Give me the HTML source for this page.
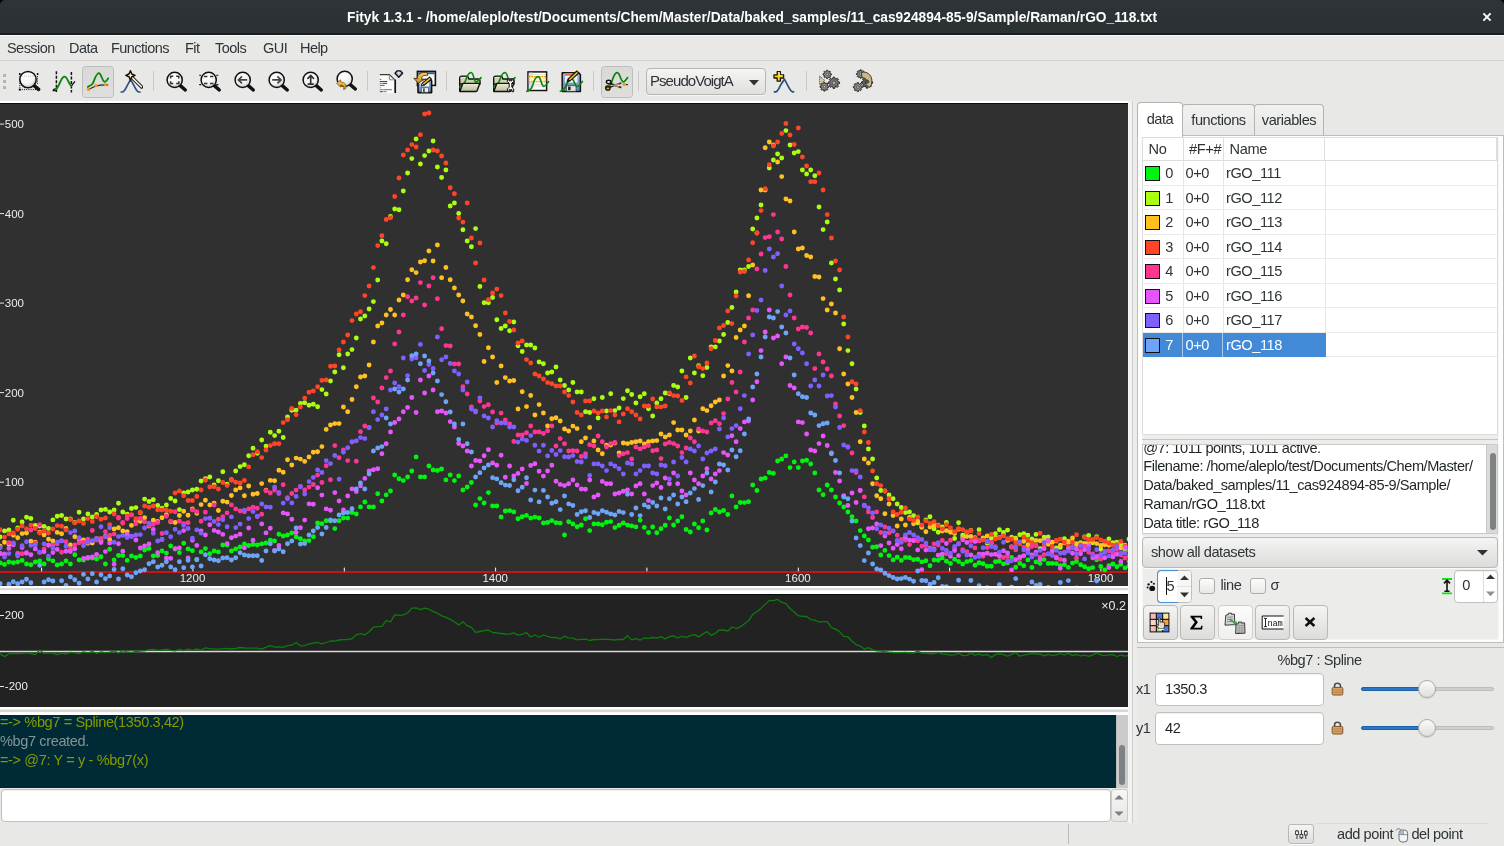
<!DOCTYPE html>
<html><head><meta charset="utf-8"><title>Fityk</title><style>
*{box-sizing:border-box;margin:0;padding:0}
html,body{width:1504px;height:846px;overflow:hidden}
body{background:#e8e8e7;font-family:"Liberation Sans",sans-serif;font-size:14px;color:#2e3436;position:relative}
.abs{position:absolute}
#title{left:0;top:0;width:1504px;height:35px;background:linear-gradient(#2f3438,#2b3033);border-bottom:2px solid #1b1e20;border-radius:5px 5px 0 0}
#title .t{position:absolute;left:0;width:1504px;top:7.6px;text-align:center;color:#fff;font-weight:700;font-size:15px;white-space:nowrap;transform:scaleX(.9165);transform-origin:752px 0}
#corner{left:0;top:0;width:1504px;height:10px;background:#000}
#menu{left:0;top:35px;width:1504px;height:26px;background:#e8e8e7;border-top:1px solid #fafafa;border-bottom:1px solid #d3d3d2}
#menu span{position:absolute;top:4px;font-size:14.5px;letter-spacing:-0.55px;white-space:nowrap}
#toolbar{left:0;top:61px;width:1504px;height:40px;background:#e8e8e7}
.btnon{width:32px;height:31.5px;background:linear-gradient(#d9d9d8,#dededd);border:1px solid #bdbdbb;border-radius:3.5px}
#combo{left:646px;top:7px;width:120px;height:27px;border:1px solid #b6b6b3;border-radius:4px;background:linear-gradient(#f5f5f4,#dfdfde);box-shadow:0 1px 0 rgba(255,255,255,.6)}
#combo span{position:absolute;left:3px;top:3.2px;font-size:15px;letter-spacing:-0.95px;white-space:nowrap}
.sep{position:absolute;top:10px;width:1px;height:20px;background:#c9c9c8}
#plotwrap{left:0;top:101px;width:1128px;height:493px;background:#fff}
#plot{position:absolute;left:0;top:2px}
#sash1{left:0;top:586px;width:1128px;height:8px;background:linear-gradient(#fff 0,#fff 28%,#d9d9d7 30%,#d9d9d7 50%,#f6f6f5 52%,#fff 70%,#fff 100%)}
#aux{position:absolute;left:0;top:594px}
#sash2{left:0;top:707px;width:1128px;height:8px;background:linear-gradient(#fff 0,#fff 30%,#d6d6d4 33%,#d6d6d4 58%,#f6f6f5 62%,#fff 75%,#fff 100%)}
#out{left:0;top:715px;width:1116px;height:73px;background:#002b36;color:#869a00;font-size:14.5px;letter-spacing:-0.36px;line-height:19px;white-space:pre;overflow:hidden}
#out div{position:absolute;left:0;top:-2px}
</style></head><body>
<div id="root" style="position:absolute;left:0;top:0;width:1504px;height:846px;will-change:transform">
<div id="corner" class="abs"></div>
<div id="title" class="abs"><div class="t">Fityk 1.3.1 - /home/aleplo/test/Documents/Chem/Master/Data/baked_samples/11_cas924894-85-9/Sample/Raman/rGO_118.txt</div><svg class="abs" style="left:1481px;top:11px" width="12" height="12" viewBox="0 0 12 12"><path d="M2.4 2.4L9.6 9.6M9.6 2.4L2.4 9.6" stroke="#fff" stroke-width="2"/></svg></div>
<div id="menu" class="abs"><span style="left:7px">Session</span><span style="left:69px">Data</span><span style="left:111px">Functions</span><span style="left:185px">Fit</span><span style="left:215px">Tools</span><span style="left:263px">GUI</span><span style="left:300px">Help</span></div>
<div id="toolbar" class="abs"><svg width="0" height="0" style="position:absolute"><defs>
<radialGradient id="lg" cx="40%" cy="30%" r="75%"><stop offset="0" stop-color="#ffffff"/><stop offset="0.6" stop-color="#f4f4f4"/><stop offset="1" stop-color="#c4c4c4"/></radialGradient>
<linearGradient id="fold" x1="0" y1="0" x2="0" y2="1"><stop offset="0" stop-color="#ecedcf"/><stop offset="1" stop-color="#b9bb9b"/></linearGradient>
<linearGradient id="flop" x1="0" y1="0" x2="0" y2="1"><stop offset="0" stop-color="#9dbbe0"/><stop offset="1" stop-color="#5a82b6"/></linearGradient>
<linearGradient id="btn" x1="0" y1="0" x2="0" y2="1"><stop offset="0" stop-color="#f4f4f3"/><stop offset="1" stop-color="#dddddc"/></linearGradient>
<linearGradient id="gold" x1="0" y1="0" x2="0" y2="1"><stop offset="0" stop-color="#f6d26a"/><stop offset="1" stop-color="#c98a1a"/></linearGradient>
</defs></svg><div class="abs" style="left:2.6px;top:13px;width:3px;height:3px;background:#b4b4b3"></div><div class="abs" style="left:2.6px;top:19px;width:3px;height:3px;background:#b4b4b3"></div><div class="abs" style="left:2.6px;top:24.6px;width:3px;height:3px;background:#b4b4b3"></div><div class="abs" style="left:17.0px;top:8px;width:24px;height:24px"><svg width="24" height="24" viewBox="0 0 24 24"><path d="M16.8 16.4L21.6 20.4" stroke="#111" stroke-width="3.6" stroke-linecap="round"/><circle cx="11" cy="10.6" r="8.2" fill="url(#lg)" stroke="#111" stroke-width="1.5"/><path d="M2.8 5V20.6H20.5M20.5 5V16" fill="none" stroke="#111" stroke-width="1" stroke-dasharray="1 1.2"/><path d="M5 7.2H17" stroke="#bbb" stroke-width=".8" stroke-dasharray="1 1"/><circle cx="2.8" cy="5" r="1" fill="#111"/><circle cx="20.6" cy="5" r="1" fill="#111"/><circle cx="2.8" cy="20.7" r="1.1" fill="#111"/></svg></div><div class="abs" style="left:49.0px;top:8px;width:28px;height:24px"><svg width="28" height="24" viewBox="0 0 28 24"><path d="M7.4 2.2V23M22.4 3V23.4" stroke="#111" stroke-width="1.5" stroke-dasharray="3 1.5"/><path d="M4 20.8l2.6-1.2M3.6 21.6h3.4" stroke="#111" stroke-width="1.2"/><path d="M22.6 16.6L26 12.4" stroke="#111" stroke-width="1.3"/><path d="M6.6 20.6C10 19 11.5 8.5 15.2 7.6C18.5 7 19.5 15.5 22.4 16.8" fill="none" stroke="#0a840a" stroke-width="1.9" stroke-linecap="round" stroke-linejoin="round"/></svg></div><div class="abs btnon" style="left:81.5px;top:5px"></div><div class="abs" style="left:84.5px;top:8px;width:26px;height:24px"><svg width="26" height="24" viewBox="0 0 26 24"><path d="M2.8 18C5 16 6.8 16.8 8 14.2C10 9 11.5 3.9 14 4.2C16.5 4.8 17 12 19.5 12.9C21 13.1 22.4 10.4 23.2 9.4" fill="none" stroke="#0a840a" stroke-width="1.8" stroke-linecap="round" stroke-linejoin="round"/><path d="M3.8 20.4C8 18 12 15.4 23.2 16" fill="none" stroke="#1c1c30" stroke-width="1.1"/><circle cx="3.6" cy="20.4" r="1.7" fill="#f0960f"/><circle cx="11" cy="16.6" r="1.7" fill="#f0960f"/><circle cx="20.4" cy="15.5" r="1.6" fill="#f0960f"/></svg></div><div class="abs" style="left:119.0px;top:8px;width:24px;height:24px"><svg width="24" height="24" viewBox="0 0 24 24"><path d="M2.2 23H3.6C5.4 22.6 6.4 20.4 8.2 16.6L11.6 10.4L15 16.6C16.8 20.4 17.8 22.6 19.6 23H21" fill="none" stroke="#2c5288" stroke-width="1.7" stroke-linecap="round" stroke-linejoin="round"/><path d="M12 7.5L22.6 18" stroke="#1a1a1a" stroke-width="3.4" stroke-linecap="round"/><path d="M12.6 8.1L22.4 17.8" stroke="#f2f0e6" stroke-width="1.6" stroke-linecap="round"/><path d="M11.4 1.8L12.8 5L16 6.4L12.8 7.8L11.4 11L10 7.8L6.8 6.4L10 5Z" fill="#e2b45a" stroke="#15100a" stroke-width="1.5" stroke-linejoin="round"/><path d="M11.4 3.8L12 5.8L14 6.4L12 7L11.4 9L10.8 7L8.8 6.4L10.8 5.8Z" fill="#fff2cc"/></svg></div><div class="sep" style="left:153px"></div><div class="abs" style="left:164.0px;top:8px;width:24px;height:24px"><svg width="24" height="24" viewBox="0 0 24 24"><path d="M16.3 16.6L21.3 21" stroke="#111" stroke-width="3.4" stroke-linecap="round"/><circle cx="10.7" cy="10.9" r="7.6" fill="url(#lg)" stroke="#111" stroke-width="1.5"/><path d="M6.6 9.6V7.2H9.2M12.2 7.2H14.8V9.6M14.8 12.2V14.6H12.2M9.2 14.6H6.6V12.2" fill="none" stroke="#333" stroke-width="1.5"/></svg></div><div class="abs" style="left:198.0px;top:8px;width:24px;height:24px"><svg width="24" height="24" viewBox="0 0 24 24"><path d="M16.3 16.6L21.3 21" stroke="#111" stroke-width="3.4" stroke-linecap="round"/><circle cx="10.7" cy="10.9" r="7.6" fill="url(#lg)" stroke="#111" stroke-width="1.5"/><path d="M6 7.4H9.4M12 7.4H15.4M6 14.4H9.4M12 14.4H15.4" stroke="#333" stroke-width="1.5"/><path d="M1.2 6.2H3.2M1.2 15.6H3.2M18.2 6.2H20.4M18.2 15.6H20.4" stroke="#111" stroke-width="1.1"/></svg></div><div class="abs" style="left:232.0px;top:8px;width:24px;height:24px"><svg width="24" height="24" viewBox="0 0 24 24"><path d="M16.3 16.6L21.3 21" stroke="#111" stroke-width="3.4" stroke-linecap="round"/><circle cx="10.7" cy="10.9" r="7.6" fill="url(#lg)" stroke="#111" stroke-width="1.5"/><path d="M15.2 10.9H6.6M10 7.4L6.4 10.9L10 14.4" fill="none" stroke="#444" stroke-width="1.7"/></svg></div><div class="abs" style="left:266.0px;top:8px;width:24px;height:24px"><svg width="24" height="24" viewBox="0 0 24 24"><path d="M16.3 16.6L21.3 21" stroke="#111" stroke-width="3.4" stroke-linecap="round"/><circle cx="10.7" cy="10.9" r="7.6" fill="url(#lg)" stroke="#111" stroke-width="1.5"/><path d="M6.2 10.9H14.8M11.4 7.4L15 10.9L11.4 14.4" fill="none" stroke="#444" stroke-width="1.7"/></svg></div><div class="abs" style="left:300.0px;top:8px;width:24px;height:24px"><svg width="24" height="24" viewBox="0 0 24 24"><path d="M16.3 16.6L21.3 21" stroke="#111" stroke-width="3.4" stroke-linecap="round"/><circle cx="10.7" cy="10.9" r="7.6" fill="url(#lg)" stroke="#111" stroke-width="1.5"/><path d="M10.7 15V6.6M7.4 9.8L10.7 6.4L14 9.8M7.6 15.2H13.8" fill="none" stroke="#333" stroke-width="1.7"/></svg></div><div class="abs" style="left:333.0px;top:8px;width:24px;height:24px"><svg width="24" height="24" viewBox="0 0 24 24"><path d="M17.3 15.6L22.3 20" stroke="#111" stroke-width="3.4" stroke-linecap="round"/><circle cx="11.7" cy="9.9" r="7.6" fill="url(#lg)" stroke="#111" stroke-width="1.5"/><path d="M3.6 14.2L7.6 10.8V13C11.6 12.8 13.8 15.2 12.6 19.8L10.4 20.4C11.4 17.6 10.6 16.2 7.6 16.2V18.2Z" fill="url(#gold)" stroke="#8a5a0a" stroke-width=".8" stroke-linejoin="round"/></svg></div><div class="sep" style="left:367px"></div><div class="abs" style="left:378.0px;top:8px;width:26px;height:24px"><svg width="26" height="25" viewBox="0 0 26 25"><path d="M1.8 5.6H11.6L17 10.8V24H1.8Z" fill="#fbfbfb"/><path d="M1.8 5.6H11.4L16.4 10.4" fill="none" stroke="#3a3a3a" stroke-width="1.1"/><path d="M11.4 6.4V10.8H17" fill="none" stroke="#8a8a8a" stroke-width="1"/><path d="M17.2 10.4V24" stroke="#111" stroke-width="1.7"/><path d="M1.8 10.4H3.4" stroke="#3a9a3a" stroke-width="1"/><path d="M1.8 12.5H9.2" stroke="#3a3a8c" stroke-width="1"/><path d="M1.8 14.4H4" stroke="#f05020" stroke-width="1"/><path d="M4.4 14.4H9.2" stroke="#3a3a8c" stroke-width="1"/><path d="M1.8 16.4H6.6" stroke="#5a5a9c" stroke-width="1"/><path d="M1.8 18.8H2.8" stroke="#6a8ab0" stroke-width="1"/><path d="M1.8 20.7H4.8" stroke="#f05020" stroke-width="1"/><path d="M5.2 20.7H14" stroke="#6a6aac" stroke-width="1"/><path d="M1.8 22.7H5.2" stroke="#3a3a8c" stroke-width="1"/><path d="M5.6 22.7H8.6" stroke="#f05020" stroke-width="1"/><path d="M19 1.9H22.6L24.6 4.2L20.8 8.2L17 4.2Z" fill="#b9aedc" stroke="#0e0e0e" stroke-width="1.3" stroke-linejoin="round"/><path d="M19.6 3L20.8 6.6L22 3Z" fill="#e6e0f6"/></svg></div><div class="abs" style="left:412.0px;top:8px;width:25px;height:24px"><svg width="25" height="25" viewBox="0 0 25 25"><rect x="5.4" y="2.4" width="18" height="14" fill="#f7f7f7" stroke="#111" stroke-width="1.6"/><rect x="6.2" y="3.2" width="16.4" height="2" fill="#3a5f8c"/><path d="M6 10.6H18.4L19.6 11.8V23.6H6Z" fill="url(#flop)" stroke="#111" stroke-width="1.6" stroke-linejoin="round"/><rect x="8.4" y="10.8" width="8.6" height="6.6" fill="#f2f4f8"/><path d="M8.4 11.6H12" stroke="#e08080" stroke-width="1.4"/><rect x="9.4" y="18.8" width="7" height="4.4" fill="#f2f2ee" stroke="#444" stroke-width=".6"/><rect x="11" y="19.4" width="1.8" height="3.4" fill="#28507e"/><path d="M1.8 9.2L5.2 9.8C5.2 5 9.2 2.6 15.4 3.6L15.6 6.4C11.6 5.8 9.4 7.2 9.6 10.2L11.6 10.6L6.2 14.2Z" fill="url(#gold)" stroke="#4e3608" stroke-width=".9" stroke-linejoin="round"/><path d="M9.4 16.8L10.4 14.2L17.6 8.2L19.4 10.2L12 16.2Z" fill="#f4c21c" stroke="#111" stroke-width="1.1" stroke-linejoin="round"/><path d="M9.4 16.8L10.4 14.2L12 16.2Z" fill="#f2e0c8" stroke="#111" stroke-width=".7"/></svg></div><div class="sep" style="left:446px"></div><div class="abs" style="left:457.0px;top:8px;width:25px;height:24px"><svg width="25" height="25" viewBox="0 0 25 25"><path d="M2.7 21.8V9.2C2.7 7.9 3.4 7.3 4.7 7.3H10.2C10.8 7.3 11 7.6 11.2 8.2L11.8 10H21.4C22.6 10 23 10.6 23 11.6V15H2.7Z" fill="#cfd1b0" stroke="#111" stroke-width="1.4" stroke-linejoin="round"/><path d="M3.6 9.4C3.6 8.6 4 8.3 4.8 8.3H9.6" fill="none" stroke="#eef0d8" stroke-width=".9"/><path d="M2.8 17.8C5 16.8 6.6 15.4 7.8 13.2C9.6 9.6 10.2 4 14 3.5C17 3.6 16.6 12.6 19 13.1C20.6 13 22.4 10.4 24 8.6" fill="none" stroke="#0a840a" stroke-width="1.6" stroke-linecap="round" stroke-linejoin="round"/><path d="M2.8 22.4L5.8 14.5H22.8L20.2 21.6C20 22.2 19.6 22.5 19 22.5H3.6C3 22.5 2.7 22.5 2.8 22.4Z" fill="url(#fold)" stroke="#111" stroke-width="1.4" stroke-linejoin="round"/><path d="M6.6 15.5H21.4" stroke="#f4f6e0" stroke-width=".8"/></svg></div><div class="abs" style="left:491.0px;top:8px;width:25px;height:24px"><svg width="25" height="25" viewBox="0 0 25 25"><path d="M2.7 21.8V9.2C2.7 7.9 3.4 7.3 4.7 7.3H10.2C10.8 7.3 11 7.6 11.2 8.2L11.8 10H21.4C22.6 10 23 10.6 23 11.6V15H2.7Z" fill="#cfd1b0" stroke="#111" stroke-width="1.4" stroke-linejoin="round"/><path d="M3.6 9.4C3.6 8.6 4 8.3 4.8 8.3H9.6" fill="none" stroke="#eef0d8" stroke-width=".9"/><path d="M2.8 17.8C5 16.8 6.6 15.4 7.8 13.2C9.6 9.6 10.2 4 14 3.5C17 3.6 16.6 12.6 19 13.1C20.6 13 22.4 10.4 24 8.6" fill="none" stroke="#0a840a" stroke-width="1.6" stroke-linecap="round" stroke-linejoin="round"/><path d="M2.8 22.4L5.8 14.5H22.8L20.2 21.6C20 22.2 19.6 22.5 19 22.5H3.6C3 22.5 2.7 22.5 2.8 22.4Z" fill="url(#fold)" stroke="#111" stroke-width="1.4" stroke-linejoin="round"/><path d="M6.6 15.5H21.4" stroke="#f4f6e0" stroke-width=".8"/><path d="M16.4 10V12.4L18.2 14.2V18.2L16.4 20V22.7H18V20.8H21V22.7H22.7V20L20.8 18.2V14.2L22.7 12.4V10H21V11.8H18V10Z" fill="#fdfdfd" stroke="#111" stroke-width="1" stroke-linejoin="round"/></svg></div><div class="abs" style="left:525.0px;top:8px;width:25px;height:24px"><svg width="25" height="25" viewBox="0 0 25 25"><rect x="3" y="2.9" width="18.6" height="18.6" fill="#fbfbfb" stroke="#151515" stroke-width="1.5"/><rect x="3.8" y="3.7" width="4" height="17" fill="#d4dcea"/><path d="M3.8 5.6H20.8M3.8 17.6H20.8" stroke="#dcdcdc" stroke-width=".8"/><rect x="4" y="7.6" width="16.8" height="5.2" fill="#fdf0c4" stroke="#e8a000" stroke-width="1.1" stroke-dasharray="1.8 .7"/><path d="M8 15.6H20" stroke="#dedede" stroke-width="1.2"/><path d="M1.8 22.4C5 21.6 6.4 20.6 7.6 16.6C9 11.4 10.6 7.4 13.2 7.6C16 8 16 16.6 18.6 17.4C20.6 17.6 22.4 14.2 23.6 12.6" fill="none" stroke="#0a840a" stroke-width="1.6" stroke-linecap="round" stroke-linejoin="round"/></svg></div><div class="abs" style="left:559.0px;top:8px;width:25px;height:24px"><svg width="25" height="25" viewBox="0 0 25 25"><path d="M3.2 3.8H19.6L21.4 5.6V22.6H3.2Z" fill="url(#flop)" stroke="#151515" stroke-width="1.5" stroke-linejoin="round"/><rect x="6" y="4.6" width="12.4" height="9" fill="#f6f6f6"/><rect x="6" y="4.6" width="12.4" height="2.2" fill="#ee6a5a"/><path d="M6.8 9H17.6M6.8 11H17.6" stroke="#d4d4d4" stroke-width=".7"/><rect x="7.4" y="16.8" width="9.6" height="5.4" fill="#e4e4e0" stroke="#333" stroke-width=".6"/><rect x="9" y="17.6" width="2.6" height="3.6" fill="#222"/><path d="M1.4 22.2C4 21.6 5.6 20.4 7.2 16.4C9 12 10.4 9 12.8 9.4C15.2 10.2 15.6 17 18 17.6C20 17.8 22 14.2 23.4 12.4" fill="none" stroke="#0a840a" stroke-width="1.6" stroke-linecap="round" stroke-linejoin="round"/><path d="M8.2 12.8L9.2 10L17.8 2L19.8 4L11 11.8Z" fill="#f4c21c" stroke="#151515" stroke-width="1.1" stroke-linejoin="round"/><path d="M8.2 12.8L9.2 10L11 11.8Z" fill="#222" stroke="#151515" stroke-width=".7"/></svg></div><div class="sep" style="left:593px"></div><div class="abs btnon" style="left:601px;top:5px"></div><div class="abs" style="left:605.0px;top:8px;width:24px;height:24px"><svg width="24" height="24" viewBox="0 0 24 24"><path d="M0.8 19.4V17.6C2.4 16.4 4 16.6 5.2 16C6.6 14.6 7.2 11 8.2 8.6C9.4 5.8 10.6 3.6 12.4 3.7C15 4 15.4 12 18.4 13C19.8 12.8 21.4 10.2 22.6 8.6" fill="none" stroke="#0a840a" stroke-width="1.7" stroke-linecap="round" stroke-linejoin="round"/><circle cx="2.4" cy="20.2" r="1.8" fill="#f0a010"/><path d="M19 15.6H23" stroke="#222" stroke-width="1.1"/><path d="M5 14.4L15.6 18.4M4.6 18.2L15.6 14.2" stroke="#222" stroke-width="1.7" stroke-linecap="round"/><path d="M8.4 15.9L14.4 18M8.4 17L14.4 14.8" stroke="#e8e8e8" stroke-width=".7"/><ellipse cx="3.6" cy="13" rx="2.2" ry="1.7" fill="#f2f2f2" stroke="#111" stroke-width="1.4"/><ellipse cx="2.9" cy="19.4" rx="2.1" ry="1.7" fill="none" stroke="#111" stroke-width="1.4"/><circle cx="10.6" cy="16.4" r="1.3" fill="#c88a18"/><circle cx="19.2" cy="15.5" r="1.8" fill="#f0a010"/></svg></div><div class="sep" style="left:638px"></div><div class="abs" id="combo"><span>PseudoVoigtA</span><svg class="abs" style="left:102px;top:11px" width="10" height="6" viewBox="0 0 10 6"><path d="M0 0H10L5 5.4Z" fill="#2e3436"/></svg></div><div class="abs" style="left:772.0px;top:8px;width:24px;height:24px"><svg width="24" height="24" viewBox="0 0 24 24"><path d="M2.4 22.8H3.8C5.6 22.4 6.6 20.4 8.2 16.8L12.4 10.2L16 16.8C17.8 20.4 18.8 22.4 20.4 22.8H21.6" fill="none" stroke="#27517f" stroke-width="1.7" stroke-linecap="round" stroke-linejoin="round"/><path d="M5.2 2.6H8.4V5.8H11.6V9H8.4V12.2H5.2V9H2V5.8H5.2Z" fill="#f8d424" stroke="#1a1404" stroke-width="1.3" stroke-linejoin="round"/><path d="M5.9 3.6H7.6V6.6H10.6" fill="none" stroke="#fdf0a0" stroke-width=".8"/></svg></div><div class="sep" style="left:806px"></div><div class="abs" style="left:816.5px;top:8px;width:24px;height:24px"><svg width="24" height="24" viewBox="0 0 24 24"><path d="M14.4 4.9L14.4 5.9L13.2 6.2L12.9 7.0L13.5 8.0L12.8 8.7L11.8 8.1L11.0 8.4L10.7 9.6L9.7 9.6L9.4 8.4L8.6 8.1L7.6 8.7L6.9 8.0L7.5 7.0L7.2 6.2L6.0 5.9L6.0 4.9L7.2 4.6L7.5 3.8L6.9 2.8L7.6 2.1L8.6 2.7L9.4 2.4L9.7 1.2L10.7 1.2L11.0 2.4L11.8 2.7L12.8 2.1L13.5 2.8L12.9 3.8L13.2 4.6Z" fill="#8c8c8c" stroke="#2a2a2a" stroke-width="1" stroke-linejoin="round"/><circle cx="10.2" cy="5.4" r="1.2" fill="#c8c8c8" stroke="#3a3a3a" stroke-width=".7"/><path d="M11.8 17.1L11.8 18.3L10.5 18.5L10.2 19.3L10.9 20.4L10.1 21.2L9.0 20.5L8.2 20.8L8.0 22.1L6.8 22.1L6.6 20.8L5.8 20.5L4.7 21.2L3.9 20.4L4.6 19.3L4.3 18.5L3.0 18.3L3.0 17.1L4.3 16.9L4.6 16.1L3.9 15.0L4.7 14.2L5.8 14.9L6.6 14.6L6.8 13.3L8.0 13.3L8.2 14.6L9.0 14.9L10.1 14.2L10.9 15.0L10.2 16.1L10.5 16.9Z" fill="#868686" stroke="#2a2a2a" stroke-width="1" stroke-linejoin="round"/><circle cx="7.4" cy="17.7" r="1.2" fill="#c8c8c8" stroke="#3a3a3a" stroke-width=".7"/><path d="M22.6 13.1L22.6 14.5L21.0 14.9L20.6 15.9L21.4 17.3L20.4 18.3L19.0 17.5L18.0 17.9L17.6 19.5L16.2 19.5L15.8 17.9L14.8 17.5L13.4 18.3L12.4 17.3L13.2 15.9L12.8 14.9L11.2 14.5L11.2 13.1L12.8 12.7L13.2 11.7L12.4 10.3L13.4 9.3L14.8 10.1L15.8 9.7L16.2 8.1L17.6 8.1L18.0 9.7L19.0 10.1L20.4 9.3L21.4 10.3L20.6 11.7L21.0 12.7Z" fill="#727272" stroke="#2a2a2a" stroke-width="1" stroke-linejoin="round"/><circle cx="16.9" cy="13.8" r="1.6" fill="#c8c8c8" stroke="#3a3a3a" stroke-width=".7"/><path d="M2.6 7L7.8 11.4L2.6 15.8Z" fill="#d8c79a" stroke="#3a3424" stroke-width=".8" stroke-dasharray="1.2 .8" stroke-linejoin="round"/></svg></div><div class="abs" style="left:852.0px;top:8px;width:24px;height:24px"><svg width="24" height="24" viewBox="0 0 24 24"><path d="M12.8 4.5L12.8 5.5L11.6 5.8L11.3 6.6L11.9 7.6L11.2 8.3L10.2 7.7L9.4 8.0L9.1 9.2L8.1 9.2L7.8 8.0L7.0 7.7L6.0 8.3L5.3 7.6L5.9 6.6L5.6 5.8L4.4 5.5L4.4 4.5L5.6 4.2L5.9 3.4L5.3 2.4L6.0 1.7L7.0 2.3L7.8 2.0L8.1 0.8L9.1 0.8L9.4 2.0L10.2 2.3L11.2 1.7L11.9 2.4L11.3 3.4L11.6 4.2Z" fill="#8a8a8a" stroke="#2a2a2a" stroke-width="1" stroke-linejoin="round"/><circle cx="8.6" cy="5" r="1.2" fill="#c8c8c8" stroke="#3a3a3a" stroke-width=".7"/><path d="M10.3 17.5L10.3 18.7L9.0 19.0L8.7 19.8L9.4 20.8L8.5 21.7L7.5 21.0L6.7 21.3L6.4 22.6L5.2 22.6L4.9 21.3L4.1 21.0L3.1 21.7L2.2 20.8L2.9 19.8L2.6 19.0L1.3 18.7L1.3 17.5L2.6 17.2L2.9 16.4L2.2 15.4L3.1 14.5L4.1 15.2L4.9 14.9L5.2 13.6L6.4 13.6L6.7 14.9L7.5 15.2L8.5 14.5L9.4 15.4L8.7 16.4L9.0 17.2Z" fill="#8a8a8a" stroke="#2a2a2a" stroke-width="1" stroke-linejoin="round"/><circle cx="5.8" cy="18.1" r="1.3" fill="#c8c8c8" stroke="#3a3a3a" stroke-width=".7"/><path d="M20.6 12.9L20.6 14.3L19.0 14.7L18.6 15.7L19.4 17.0L18.4 18.0L17.1 17.2L16.1 17.6L15.7 19.2L14.3 19.2L13.9 17.6L12.9 17.2L11.6 18.0L10.6 17.0L11.4 15.7L11.0 14.7L9.4 14.3L9.4 12.9L11.0 12.5L11.4 11.5L10.6 10.2L11.6 9.2L12.9 10.0L13.9 9.6L14.3 8.0L15.7 8.0L16.1 9.6L17.1 10.0L18.4 9.2L19.4 10.2L18.6 11.5L19.0 12.5Z" fill="#606060" stroke="#2a2a2a" stroke-width="1" stroke-linejoin="round"/><circle cx="15" cy="13.6" r="1.6" fill="#c8c8c8" stroke="#3a3a3a" stroke-width=".7"/><path d="M9.4 3.4C16.4 1.6 21.6 8 19.4 15.6L17.4 18.6L13.6 15.2C15.6 11.6 14 8.4 10 8.8Z" fill="#c9b98a" stroke="#3a3020" stroke-width=".9" stroke-linejoin="round"/><circle cx="15.2" cy="12.6" r="1.7" fill="#555" stroke="#2a2a2a" stroke-width=".6"/></svg></div></div>
<div id="plotwrap" class="abs"><svg id="plot" width="1128" height="483" viewBox="0 103 1128 483">
<rect x="0" y="103" width="1128" height="483" fill="#303030"/>
<rect x="0" y="102.7" width="1128" height="1.2" fill="#0a0a0a"/>
<path d="M0 572H1128" stroke="#c81414" stroke-width="2"/>
<path d="M41.6 567.6V571.4 M192.9 567.6V571.4 M344.3 567.6V571.4 M495.6 567.6V571.4 M646.9 567.6V571.4 M798.3 567.6V571.4 M949.6 567.6V571.4 M1100.9 567.6V571.4" stroke="#ffffff" stroke-width="1"/>
<path d="M0 482.2H4 M0 392.6H4 M0 303.1H4 M0 213.6H4 M0 124.1H4" stroke="#e8e8e8" stroke-width="1"/>
<g font-family="Liberation Sans, sans-serif" font-size="11.5" fill="#ececec">
<text x="4.8" y="486.3">100</text>
<text x="4.8" y="396.7">200</text>
<text x="4.8" y="307.2">300</text>
<text x="4.8" y="217.7">400</text>
<text x="4.8" y="128.2">500</text>
<text x="192.5" y="582.4" text-anchor="middle">1200</text>
<text x="495.2" y="582.4" text-anchor="middle">1400</text>
<text x="797.9" y="582.4" text-anchor="middle">1600</text>
<text x="1100.5" y="582.4" text-anchor="middle">1800</text>
</g>
<path d="M-8.7 569.5h0M-4.3 561.2h0M0.1 563.0h0M4.5 564.5h0M8.9 562.0h0M13.3 562.7h0M17.7 562.0h0M22.1 560.5h0M26.5 564.0h0M30.9 564.7h0M35.3 562.0h0M39.7 561.0h0M44.1 564.0h0M48.5 559.0h0M52.9 560.9h0M57.2 565.0h0M61.6 564.0h0M66.0 561.0h0M70.4 564.0h0M74.8 554.7h0M79.1 560.0h0M83.5 560.0h0M87.9 558.2h0M92.3 558.0h0M96.6 559.0h0M101.0 556.7h0M105.4 564.0h0M109.7 549.2h0M114.1 560.0h0M118.5 555.5h0M122.8 555.6h0M127.2 560.4h0M131.5 556.0h0M135.9 557.5h0M140.3 556.0h0M144.6 550.0h0M149.0 548.5h0M153.3 556.0h0M157.7 555.6h0M162.0 551.0h0M166.4 553.1h0M170.7 546.0h0M175.1 549.0h0M179.4 552.6h0M183.7 543.3h0M188.1 548.9h0M192.4 550.7h0M196.8 559.5h0M201.1 551.9h0M205.4 548.6h0M209.8 553.7h0M214.1 551.0h0M218.4 551.9h0M222.8 545.0h0M227.1 545.0h0M231.4 551.0h0M235.7 548.9h0M240.1 547.0h0M244.4 544.0h0M248.7 545.5h0M253.0 544.5h0M257.3 545.0h0M261.7 543.9h0M266.0 543.0h0M270.3 540.2h0M274.6 541.0h0M278.9 534.2h0M283.2 536.0h0M287.5 535.0h0M291.8 533.0h0M296.1 536.9h0M300.4 538.7h0M304.7 541.0h0M309.0 540.6h0M313.3 536.7h0M317.6 523.0h0M321.9 523.7h0M326.2 520.7h0M330.5 521.1h0M334.8 528.6h0M339.1 520.7h0M343.4 518.0h0M347.7 518.1h0M352.0 512.5h0M356.3 514.0h0M360.5 506.9h0M364.8 502.0h0M369.1 506.9h0M373.4 506.9h0M377.7 493.7h0M381.9 501.0h0M386.2 494.9h0M390.5 491.0h0M394.7 475.0h0M399.0 478.7h0M403.3 480.6h0M407.6 476.9h0M411.8 471.0h0M416.1 457.0h0M420.4 476.9h0M424.6 476.9h0M428.9 466.0h0M433.1 470.0h0M437.4 470.5h0M441.6 469.0h0M445.9 479.9h0M450.2 475.0h0M454.4 480.6h0M458.7 476.0h0M462.9 490.0h0M467.2 487.0h0M471.4 482.5h0M475.6 505.0h0M479.9 498.6h0M484.1 503.0h0M488.4 492.6h0M492.6 506.0h0M496.8 506.0h0M501.1 517.0h0M505.3 511.0h0M509.6 510.6h0M513.8 511.9h0M518.0 518.7h0M522.2 516.8h0M526.5 515.4h0M530.7 518.1h0M534.9 517.1h0M539.1 518.0h0M543.4 523.0h0M547.6 522.5h0M551.8 520.6h0M556.0 522.8h0M560.2 523.1h0M564.5 535.0h0M568.7 521.8h0M572.9 524.0h0M577.1 526.7h0M581.3 525.0h0M585.5 518.7h0M589.7 530.6h0M593.9 524.0h0M598.1 524.0h0M602.3 524.7h0M606.5 522.3h0M610.7 521.6h0M614.9 527.6h0M619.1 525.3h0M623.3 523.0h0M627.5 525.1h0M631.7 526.0h0M635.9 526.9h0M640.1 520.3h0M644.3 527.4h0M648.5 532.5h0M652.7 527.0h0M656.8 532.8h0M661.0 528.7h0M665.2 525.2h0M669.4 518.0h0M673.6 525.0h0M677.7 521.0h0M681.9 516.7h0M686.1 529.5h0M690.3 532.0h0M694.4 524.0h0M698.6 527.8h0M702.8 521.0h0M706.9 530.0h0M711.1 513.0h0M715.3 509.5h0M719.4 512.0h0M723.6 510.5h0M727.8 514.5h0M731.9 496.0h0M736.1 507.0h0M740.2 502.5h0M744.4 502.6h0M748.6 501.7h0M752.7 485.0h0M756.9 490.5h0M761.0 479.0h0M765.2 478.1h0M769.3 472.5h0M773.4 473.4h0M777.6 461.0h0M781.7 459.0h0M785.9 455.9h0M790.0 467.6h0M794.2 461.9h0M798.3 467.6h0M802.4 461.0h0M806.6 460.3h0M810.7 464.0h0M814.8 473.0h0M819.0 490.0h0M823.1 494.8h0M827.2 485.0h0M831.4 490.0h0M835.5 497.0h0M839.6 503.0h0M843.7 507.0h0M847.9 512.0h0M852.0 516.7h0M856.1 521.0h0M860.2 530.6h0M864.3 536.0h0M868.4 540.0h0M872.6 547.2h0M876.7 546.7h0M880.8 555.0h0M884.9 550.4h0M889.0 555.6h0M893.1 559.9h0M897.2 557.2h0M901.3 560.4h0M905.4 557.5h0M909.5 557.7h0M913.6 559.8h0M917.7 559.3h0M921.8 561.9h0M925.9 560.8h0M930.0 565.8h0M934.1 560.0h0M938.2 560.2h0M942.3 557.9h0M946.4 561.3h0M950.5 563.5h0M954.6 559.3h0M958.6 561.5h0M962.7 564.1h0M966.8 561.6h0M970.9 560.6h0M975.0 565.3h0M979.1 562.7h0M983.1 563.8h0M987.2 566.2h0M991.3 566.2h0M995.4 561.8h0M999.4 561.3h0M1003.5 563.9h0M1007.6 562.7h0M1011.6 557.4h0M1015.7 567.2h0M1019.8 563.4h0M1023.8 565.7h0M1027.9 559.9h0M1031.9 567.5h0M1036.0 561.9h0M1040.1 563.5h0M1044.1 559.6h0M1048.2 563.5h0M1052.2 563.4h0M1056.3 563.6h0M1060.3 565.6h0M1064.4 564.6h0M1068.4 567.4h0M1072.5 563.1h0M1076.5 561.6h0M1080.6 564.7h0M1084.6 566.8h0M1088.7 568.8h0M1092.7 567.6h0M1096.7 559.8h0M1100.8 566.5h0M1104.8 569.9h0M1108.9 565.7h0M1112.9 564.0h0M1116.9 566.7h0M1120.9 564.3h0M1125.0 567.9h0M1129.0 565.9h0M1133.0 570.2h0M1137.1 567.5h0" stroke="#00f410" stroke-width="4.9" stroke-linecap="round" fill="none"/>
<path d="M-8.7 531.9h0M-4.3 537.6h0M0.1 537.0h0M4.5 530.9h0M8.9 530.0h0M13.3 520.3h0M17.7 528.0h0M22.1 522.0h0M26.5 517.2h0M30.9 518.5h0M35.3 525.4h0M39.7 526.0h0M44.1 526.4h0M48.5 528.5h0M52.9 519.9h0M57.2 516.3h0M61.6 515.5h0M66.0 519.0h0M70.4 519.0h0M74.8 522.4h0M79.1 512.2h0M83.5 519.0h0M87.9 514.0h0M92.3 517.0h0M96.6 514.4h0M101.0 510.0h0M105.4 509.4h0M109.7 512.0h0M114.1 510.0h0M118.5 503.3h0M122.8 512.0h0M127.2 514.3h0M131.5 508.5h0M135.9 507.6h0M140.3 512.8h0M144.6 499.1h0M149.0 501.5h0M153.3 499.7h0M157.7 505.5h0M162.0 508.1h0M166.4 505.0h0M170.7 498.5h0M175.1 501.0h0M179.4 509.6h0M183.7 493.0h0M188.1 492.0h0M192.4 490.0h0M196.8 489.2h0M201.1 481.0h0M205.4 478.8h0M209.8 477.0h0M214.1 484.9h0M218.4 480.8h0M222.8 471.8h0M227.1 484.3h0M231.4 479.8h0M235.7 471.0h0M240.1 466.6h0M244.4 464.8h0M248.7 455.8h0M253.0 448.3h0M257.3 453.3h0M261.7 440.0h0M266.0 446.1h0M270.3 432.2h0M274.6 435.6h0M278.9 431.2h0M283.2 437.5h0M287.5 416.9h0M291.8 410.3h0M296.1 410.3h0M300.4 403.4h0M304.7 402.7h0M309.0 405.3h0M313.3 404.2h0M317.6 406.7h0M321.9 389.6h0M326.2 394.0h0M330.5 381.0h0M334.8 372.0h0M339.1 354.7h0M343.4 367.8h0M347.7 354.0h0M352.0 349.6h0M356.3 338.0h0M360.5 319.0h0M364.8 316.0h0M369.1 309.0h0M373.4 301.6h0M377.7 280.0h0M381.9 241.0h0M386.2 243.7h0M390.5 216.5h0M394.7 209.0h0M399.0 209.7h0M403.3 191.0h0M407.6 173.0h0M411.8 158.6h0M416.1 139.0h0M420.4 164.0h0M424.6 155.6h0M428.9 151.0h0M433.1 141.0h0M437.4 167.0h0M441.6 177.5h0M445.9 170.0h0M450.2 206.0h0M454.4 203.0h0M458.7 213.5h0M462.9 229.7h0M467.2 241.0h0M471.4 246.8h0M475.6 228.6h0M479.9 286.5h0M484.1 302.8h0M488.4 302.8h0M492.6 297.5h0M496.8 319.8h0M501.1 328.5h0M505.3 326.0h0M509.6 330.7h0M513.8 322.0h0M518.0 345.7h0M522.2 351.5h0M526.5 345.0h0M530.7 345.0h0M534.9 348.0h0M539.1 362.0h0M543.4 363.7h0M547.6 373.0h0M551.8 372.0h0M556.0 367.0h0M560.2 380.0h0M564.5 385.5h0M568.7 390.0h0M572.9 382.5h0M577.1 392.0h0M581.3 392.0h0M585.5 411.8h0M589.7 412.5h0M593.9 398.8h0M598.1 418.0h0M602.3 397.5h0M606.5 411.0h0M610.7 393.7h0M614.9 410.6h0M619.1 408.0h0M623.3 398.6h0M627.5 390.7h0M631.7 394.5h0M635.9 403.0h0M640.1 396.7h0M644.3 393.7h0M648.5 408.7h0M652.7 416.0h0M656.8 403.0h0M661.0 398.8h0M665.2 393.0h0M669.4 393.7h0M673.6 385.5h0M677.7 387.0h0M681.9 371.0h0M686.1 397.5h0M690.3 358.0h0M694.4 373.0h0M698.6 365.6h0M702.8 375.7h0M706.9 367.5h0M711.1 346.9h0M715.3 346.9h0M719.4 341.0h0M723.6 334.5h0M727.8 322.5h0M731.9 307.5h0M736.1 292.0h0M740.2 270.0h0M744.4 270.0h0M748.6 266.5h0M752.7 229.0h0M756.9 218.0h0M761.0 205.0h0M765.2 190.0h0M769.3 168.0h0M773.4 160.0h0M777.6 154.0h0M781.7 158.0h0M785.9 130.6h0M790.0 145.0h0M794.2 153.0h0M798.3 151.6h0M802.4 170.0h0M806.6 174.0h0M810.7 170.0h0M814.8 175.7h0M819.0 207.0h0M823.1 229.6h0M827.2 222.0h0M831.4 263.0h0M835.5 279.0h0M839.6 290.0h0M843.7 324.0h0M847.9 350.6h0M852.0 363.7h0M856.1 389.0h0M860.2 412.5h0M864.3 426.0h0M868.4 449.0h0M872.6 459.0h0M876.7 478.0h0M880.8 490.5h0M884.9 491.0h0M889.0 495.0h0M893.1 498.7h0M897.2 504.0h0M901.3 507.5h0M905.4 512.6h0M909.5 512.0h0M913.6 515.6h0M917.7 522.9h0M921.8 525.9h0M925.9 519.9h0M930.0 516.7h0M934.1 528.9h0M938.2 532.2h0M942.3 526.9h0M946.4 522.5h0M950.5 531.3h0M954.6 538.5h0M958.6 522.7h0M962.7 535.1h0M966.8 532.2h0M970.9 530.4h0M975.0 537.8h0M979.1 529.7h0M983.1 537.9h0M987.2 543.3h0M991.3 538.3h0M995.4 533.7h0M999.4 529.8h0M1003.5 532.5h0M1007.6 530.1h0M1011.6 547.0h0M1015.7 538.3h0M1019.8 534.8h0M1023.8 533.8h0M1027.9 535.2h0M1031.9 538.9h0M1036.0 534.4h0M1040.1 548.7h0M1044.1 537.2h0M1048.2 537.0h0M1052.2 542.3h0M1056.3 547.9h0M1060.3 547.4h0M1064.4 538.7h0M1068.4 542.4h0M1072.5 541.9h0M1076.5 543.8h0M1080.6 542.6h0M1084.6 536.9h0M1088.7 535.5h0M1092.7 542.7h0M1096.7 536.6h0M1100.8 549.3h0M1104.8 543.4h0M1108.9 538.9h0M1112.9 542.7h0M1116.9 542.3h0M1120.9 544.5h0M1125.0 550.1h0M1129.0 539.1h0M1133.0 537.2h0M1137.1 547.6h0" stroke="#aaff11" stroke-width="4.9" stroke-linecap="round" fill="none"/>
<path d="M-8.7 544.3h0M-4.3 545.6h0M0.1 546.1h0M4.5 542.2h0M8.9 544.2h0M13.3 535.3h0M17.7 537.8h0M22.1 533.6h0M26.5 533.0h0M30.9 541.3h0M35.3 542.2h0M39.7 532.2h0M44.1 534.9h0M48.5 539.2h0M52.9 540.9h0M57.2 532.4h0M61.6 533.7h0M66.0 528.4h0M70.4 544.9h0M74.8 536.7h0M79.1 539.3h0M83.5 539.9h0M87.9 543.3h0M92.3 543.0h0M96.6 538.6h0M101.0 541.1h0M105.4 536.4h0M109.7 539.5h0M114.1 529.0h0M118.5 527.8h0M122.8 530.9h0M127.2 531.8h0M131.5 525.4h0M135.9 520.3h0M140.3 521.2h0M144.6 517.7h0M149.0 526.0h0M153.3 520.3h0M157.7 521.4h0M162.0 517.7h0M166.4 514.7h0M170.7 521.8h0M175.1 522.5h0M179.4 515.5h0M183.7 511.2h0M188.1 515.3h0M192.4 509.0h0M196.8 513.2h0M201.1 504.6h0M205.4 500.2h0M209.8 504.9h0M214.1 503.1h0M218.4 510.5h0M222.8 501.2h0M227.1 502.1h0M231.4 495.5h0M235.7 489.9h0M240.1 487.9h0M244.4 495.8h0M248.7 486.0h0M253.0 494.3h0M257.3 493.5h0M261.7 483.6h0M266.0 490.3h0M270.3 480.4h0M274.6 480.7h0M278.9 470.3h0M283.2 472.3h0M287.5 459.8h0M291.8 465.0h0M296.1 458.1h0M300.4 459.1h0M304.7 461.4h0M309.0 457.0h0M313.3 452.2h0M317.6 451.7h0M321.9 446.6h0M326.2 429.4h0M330.5 425.0h0M334.8 423.6h0M339.1 423.6h0M343.4 407.0h0M347.7 411.7h0M352.0 399.5h0M356.3 386.7h0M360.5 377.0h0M364.8 376.0h0M369.1 365.0h0M373.4 342.0h0M377.7 326.0h0M381.9 323.0h0M386.2 315.0h0M390.5 309.5h0M394.7 315.0h0M399.0 300.0h0M403.3 295.0h0M407.6 279.7h0M411.8 269.8h0M416.1 272.6h0M420.4 262.0h0M424.6 260.7h0M428.9 251.0h0M433.1 261.0h0M437.4 245.0h0M441.6 277.7h0M445.9 267.5h0M450.2 279.7h0M454.4 288.0h0M458.7 295.0h0M462.9 301.0h0M467.2 314.0h0M471.4 317.0h0M475.6 325.7h0M479.9 334.5h0M484.1 361.5h0M488.4 347.8h0M492.6 357.0h0M496.8 382.5h0M501.1 366.0h0M505.3 377.6h0M509.6 381.0h0M513.8 380.5h0M518.0 409.0h0M522.2 391.8h0M526.5 406.6h0M530.7 395.5h0M534.9 415.0h0M539.1 404.6h0M543.4 413.0h0M547.6 426.0h0M551.8 418.8h0M556.0 417.8h0M560.2 421.0h0M564.5 429.0h0M568.7 431.0h0M572.9 426.1h0M577.1 428.6h0M581.3 441.7h0M585.5 438.0h0M589.7 427.5h0M593.9 441.0h0M598.1 450.0h0M602.3 453.7h0M606.5 445.2h0M610.7 445.1h0M614.9 443.0h0M619.1 453.0h0M623.3 443.0h0M627.5 443.6h0M631.7 442.5h0M635.9 441.7h0M640.1 441.0h0M644.3 444.0h0M648.5 441.7h0M652.7 441.0h0M656.8 440.6h0M661.0 434.0h0M665.2 436.9h0M669.4 435.0h0M673.6 422.6h0M677.7 430.0h0M681.9 430.0h0M686.1 435.0h0M690.3 431.0h0M694.4 420.0h0M698.6 431.0h0M702.8 408.7h0M706.9 410.6h0M711.1 405.7h0M715.3 402.0h0M719.4 400.0h0M723.6 376.0h0M727.8 365.6h0M731.9 371.0h0M736.1 337.5h0M740.2 330.0h0M744.4 326.0h0M748.6 295.7h0M752.7 265.0h0M756.9 233.0h0M761.0 190.0h0M765.2 147.7h0M769.3 142.0h0M773.4 145.0h0M777.6 162.0h0M781.7 176.6h0M785.9 199.0h0M790.0 201.0h0M794.2 232.0h0M798.3 249.0h0M802.4 248.0h0M806.6 255.5h0M810.7 257.0h0M814.8 276.5h0M819.0 277.0h0M823.1 298.6h0M827.2 310.0h0M831.4 304.0h0M835.5 313.0h0M839.6 348.7h0M843.7 374.0h0M847.9 384.0h0M852.0 397.5h0M856.1 412.5h0M860.2 441.7h0M864.3 459.0h0M868.4 463.0h0M872.6 483.7h0M876.7 495.7h0M880.8 498.7h0M884.9 513.7h0M889.0 504.0h0M893.1 515.6h0M897.2 526.0h0M901.3 519.0h0M905.4 525.0h0M909.5 517.5h0M913.6 523.8h0M917.7 521.1h0M921.8 527.4h0M925.9 531.7h0M930.0 527.1h0M934.1 525.3h0M938.2 525.1h0M942.3 531.1h0M946.4 530.6h0M950.5 532.2h0M954.6 533.5h0M958.6 529.3h0M962.7 537.6h0M966.8 536.6h0M970.9 536.4h0M975.0 538.1h0M979.1 540.9h0M983.1 538.5h0M987.2 535.9h0M991.3 543.0h0M995.4 538.1h0M999.4 537.5h0M1003.5 535.1h0M1007.6 540.4h0M1011.6 537.2h0M1015.7 539.1h0M1019.8 542.5h0M1023.8 541.3h0M1027.9 544.7h0M1031.9 542.5h0M1036.0 540.4h0M1040.1 540.8h0M1044.1 540.3h0M1048.2 544.2h0M1052.2 542.3h0M1056.3 541.0h0M1060.3 545.3h0M1064.4 543.0h0M1068.4 541.3h0M1072.5 538.0h0M1076.5 544.5h0M1080.6 544.0h0M1084.6 543.5h0M1088.7 542.1h0M1092.7 541.2h0M1096.7 543.6h0M1100.8 545.5h0M1104.8 544.8h0M1108.9 545.3h0M1112.9 544.7h0M1116.9 547.8h0M1120.9 547.9h0M1125.0 545.2h0M1129.0 550.3h0M1133.0 550.5h0M1137.1 550.6h0" stroke="#ffc020" stroke-width="4.9" stroke-linecap="round" fill="none"/>
<path d="M-8.7 534.4h0M-4.3 534.2h0M0.1 529.7h0M4.5 537.1h0M8.9 533.9h0M13.3 532.9h0M17.7 529.3h0M22.1 526.0h0M26.5 529.0h0M30.9 525.3h0M35.3 528.5h0M39.7 533.0h0M44.1 531.0h0M48.5 533.0h0M52.9 529.0h0M57.2 525.6h0M61.6 526.2h0M66.0 530.0h0M70.4 519.4h0M74.8 522.9h0M79.1 521.0h0M83.5 523.4h0M87.9 518.6h0M92.3 521.5h0M96.6 516.7h0M101.0 519.2h0M105.4 518.0h0M109.7 524.6h0M114.1 514.0h0M118.5 517.5h0M122.8 523.3h0M127.2 516.0h0M131.5 514.8h0M135.9 518.7h0M140.3 512.5h0M144.6 506.0h0M149.0 507.2h0M153.3 506.0h0M157.7 509.9h0M162.0 510.0h0M166.4 510.1h0M170.7 511.3h0M175.1 493.0h0M179.4 491.0h0M183.7 495.8h0M188.1 500.5h0M192.4 500.5h0M196.8 496.5h0M201.1 490.0h0M205.4 480.2h0M209.8 487.0h0M214.1 486.7h0M218.4 489.0h0M222.8 482.5h0M227.1 485.6h0M231.4 480.2h0M235.7 482.2h0M240.1 483.0h0M244.4 480.4h0M248.7 466.9h0M253.0 454.8h0M257.3 451.7h0M261.7 457.6h0M266.0 450.0h0M270.3 445.6h0M274.6 443.7h0M278.9 443.7h0M283.2 422.6h0M287.5 419.7h0M291.8 408.4h0M296.1 414.7h0M300.4 407.0h0M304.7 398.1h0M309.0 392.3h0M313.3 391.0h0M317.6 386.8h0M321.9 380.4h0M326.2 380.0h0M330.5 366.3h0M334.8 366.0h0M339.1 350.0h0M343.4 342.0h0M347.7 335.0h0M352.0 320.6h0M356.3 314.0h0M360.5 311.7h0M364.8 295.6h0M369.1 286.0h0M373.4 267.6h0M377.7 245.6h0M381.9 235.7h0M386.2 219.5h0M390.5 217.7h0M394.7 196.5h0M399.0 178.0h0M403.3 155.0h0M407.6 150.0h0M411.8 144.6h0M416.1 147.0h0M420.4 134.8h0M424.6 114.0h0M428.9 113.0h0M433.1 150.0h0M437.4 151.0h0M441.6 156.0h0M445.9 163.0h0M450.2 187.8h0M454.4 193.8h0M458.7 218.0h0M462.9 222.1h0M467.2 203.0h0M471.4 238.0h0M475.6 263.0h0M479.9 243.0h0M484.1 280.0h0M488.4 299.8h0M492.6 293.0h0M496.8 289.1h0M501.1 295.6h0M505.3 313.0h0M509.6 321.5h0M513.8 330.0h0M518.0 343.0h0M522.2 341.0h0M526.5 359.6h0M530.7 363.0h0M534.9 374.0h0M539.1 376.0h0M543.4 379.0h0M547.6 382.6h0M551.8 383.8h0M556.0 386.0h0M560.2 386.0h0M564.5 392.0h0M568.7 395.6h0M572.9 402.0h0M577.1 412.5h0M581.3 415.0h0M585.5 401.0h0M589.7 401.0h0M593.9 411.0h0M598.1 413.0h0M602.3 411.0h0M606.5 417.0h0M610.7 410.6h0M614.9 415.0h0M619.1 421.9h0M623.3 414.0h0M627.5 408.7h0M631.7 411.7h0M635.9 415.0h0M640.1 419.0h0M644.3 406.0h0M648.5 406.0h0M652.7 399.0h0M656.8 406.9h0M661.0 406.9h0M665.2 406.0h0M669.4 393.0h0M673.6 395.6h0M677.7 396.0h0M681.9 400.5h0M686.1 376.9h0M690.3 383.0h0M694.4 356.0h0M698.6 366.7h0M702.8 368.6h0M706.9 363.0h0M711.1 348.7h0M715.3 340.5h0M719.4 328.0h0M723.6 325.5h0M727.8 311.0h0M731.9 323.6h0M736.1 296.0h0M740.2 272.0h0M744.4 271.5h0M748.6 260.0h0M752.7 242.7h0M756.9 233.0h0M761.0 210.6h0M765.2 188.8h0M769.3 164.7h0M773.4 146.0h0M777.6 142.0h0M781.7 133.5h0M785.9 123.5h0M790.0 135.0h0M794.2 144.5h0M798.3 128.0h0M802.4 157.0h0M806.6 166.0h0M810.7 181.7h0M814.8 181.7h0M819.0 173.0h0M823.1 190.0h0M827.2 214.6h0M831.4 238.0h0M835.5 261.0h0M839.6 270.0h0M843.7 317.0h0M847.9 337.0h0M852.0 381.7h0M856.1 384.0h0M860.2 410.6h0M864.3 432.0h0M868.4 442.5h0M872.6 471.0h0M876.7 483.7h0M880.8 485.6h0M884.9 491.0h0M889.0 498.7h0M893.1 511.9h0M897.2 514.5h0M901.3 512.3h0M905.4 508.0h0M909.5 519.1h0M913.6 520.5h0M917.7 516.9h0M921.8 525.0h0M925.9 520.9h0M930.0 523.4h0M934.1 521.6h0M938.2 525.7h0M942.3 528.9h0M946.4 524.8h0M950.5 527.9h0M954.6 531.7h0M958.6 528.6h0M962.7 529.6h0M966.8 531.9h0M970.9 530.8h0M975.0 538.4h0M979.1 533.6h0M983.1 540.1h0M987.2 541.1h0M991.3 534.4h0M995.4 539.1h0M999.4 537.8h0M1003.5 535.9h0M1007.6 538.8h0M1011.6 539.3h0M1015.7 542.7h0M1019.8 543.9h0M1023.8 537.0h0M1027.9 539.5h0M1031.9 542.8h0M1036.0 545.1h0M1040.1 533.2h0M1044.1 545.7h0M1048.2 541.0h0M1052.2 546.8h0M1056.3 540.5h0M1060.3 539.3h0M1064.4 542.3h0M1068.4 546.2h0M1072.5 542.5h0M1076.5 534.7h0M1080.6 544.9h0M1084.6 537.5h0M1088.7 539.8h0M1092.7 539.5h0M1096.7 537.6h0M1100.8 540.0h0M1104.8 541.3h0M1108.9 543.0h0M1112.9 545.2h0M1116.9 544.7h0M1120.9 541.4h0M1125.0 546.1h0M1129.0 550.1h0M1133.0 550.1h0M1137.1 547.4h0" stroke="#ff4428" stroke-width="4.9" stroke-linecap="round" fill="none"/>
<path d="M-8.7 548.7h0M-4.3 550.4h0M0.1 553.2h0M4.5 555.1h0M8.9 542.8h0M13.3 542.9h0M17.7 553.3h0M22.1 553.7h0M26.5 553.4h0M30.9 530.0h0M35.3 542.9h0M39.7 524.7h0M44.1 548.9h0M48.5 545.0h0M52.9 545.1h0M57.2 543.9h0M61.6 552.2h0M66.0 541.8h0M70.4 548.8h0M74.8 544.9h0M79.1 542.7h0M83.5 542.3h0M87.9 539.1h0M92.3 530.5h0M96.6 540.1h0M101.0 538.5h0M105.4 531.7h0M109.7 535.2h0M114.1 534.1h0M118.5 518.0h0M122.8 522.4h0M127.2 518.5h0M131.5 515.1h0M135.9 523.8h0M140.3 518.5h0M144.6 521.9h0M149.0 525.6h0M153.3 524.3h0M157.7 522.5h0M162.0 533.5h0M166.4 516.3h0M170.7 521.3h0M175.1 511.8h0M179.4 521.3h0M183.7 523.7h0M188.1 522.7h0M192.4 510.0h0M196.8 511.8h0M201.1 521.2h0M205.4 512.2h0M209.8 518.1h0M214.1 505.0h0M218.4 519.3h0M222.8 516.6h0M227.1 512.9h0M231.4 504.9h0M235.7 509.0h0M240.1 511.0h0M244.4 511.7h0M248.7 508.9h0M253.0 507.2h0M257.3 508.3h0M261.7 514.2h0M266.0 490.8h0M270.3 493.0h0M274.6 490.0h0M278.9 493.6h0M283.2 484.8h0M287.5 497.8h0M291.8 493.5h0M296.1 490.1h0M300.4 486.5h0M304.7 490.0h0M309.0 487.1h0M313.3 484.5h0M317.6 475.1h0M321.9 482.5h0M326.2 465.8h0M330.5 479.7h0M334.8 445.6h0M339.1 457.7h0M343.4 450.0h0M347.7 460.6h0M352.0 442.1h0M356.3 461.2h0M360.5 431.7h0M364.8 426.0h0M369.1 427.8h0M373.4 398.0h0M377.7 402.0h0M381.9 388.0h0M386.2 377.6h0M390.5 371.0h0M394.7 344.0h0M399.0 332.0h0M403.3 315.0h0M407.6 296.8h0M411.8 301.0h0M416.1 298.0h0M420.4 282.6h0M424.6 305.0h0M428.9 286.0h0M433.1 277.7h0M437.4 298.7h0M441.6 328.8h0M445.9 345.6h0M450.2 346.0h0M454.4 364.0h0M458.7 364.0h0M462.9 386.7h0M467.2 394.0h0M471.4 407.0h0M475.6 412.0h0M479.9 401.0h0M484.1 406.6h0M488.4 404.7h0M492.6 412.0h0M496.8 423.0h0M501.1 413.1h0M505.3 420.0h0M509.6 424.0h0M513.8 441.5h0M518.0 435.0h0M522.2 435.0h0M526.5 432.8h0M530.7 426.0h0M534.9 432.0h0M539.1 432.0h0M543.4 433.5h0M547.6 430.7h0M551.8 426.0h0M556.0 446.0h0M560.2 438.6h0M564.5 443.8h0M568.7 451.0h0M572.9 450.7h0M577.1 451.0h0M581.3 456.5h0M585.5 453.7h0M589.7 444.8h0M593.9 446.0h0M598.1 436.0h0M602.3 441.8h0M606.5 447.0h0M610.7 443.6h0M614.9 442.5h0M619.1 455.6h0M623.3 453.7h0M627.5 452.6h0M631.7 459.0h0M635.9 447.0h0M640.1 448.9h0M644.3 447.0h0M648.5 445.5h0M652.7 450.7h0M656.8 450.0h0M661.0 458.6h0M665.2 444.0h0M669.4 442.5h0M673.6 443.6h0M677.7 446.0h0M681.9 452.6h0M686.1 448.0h0M690.3 438.0h0M694.4 441.7h0M698.6 429.0h0M702.8 431.0h0M706.9 432.0h0M711.1 423.0h0M715.3 420.7h0M719.4 423.7h0M723.6 413.6h0M727.8 399.0h0M731.9 382.5h0M736.1 392.0h0M740.2 372.0h0M744.4 342.0h0M748.6 318.0h0M752.7 310.0h0M756.9 269.0h0M761.0 254.0h0M765.2 237.6h0M769.3 236.7h0M773.4 214.6h0M777.6 232.0h0M781.7 239.0h0M785.9 266.5h0M790.0 295.0h0M794.2 318.0h0M798.3 329.0h0M802.4 327.0h0M806.6 327.5h0M810.7 333.0h0M814.8 368.6h0M819.0 354.0h0M823.1 362.0h0M827.2 369.0h0M831.4 376.0h0M835.5 404.0h0M839.6 416.0h0M843.7 425.6h0M847.9 447.0h0M852.0 453.0h0M856.1 472.5h0M860.2 490.5h0M864.3 496.9h0M868.4 511.9h0M872.6 517.5h0M876.7 511.9h0M880.8 532.5h0M884.9 527.0h0M889.0 532.9h0M893.1 530.9h0M897.2 535.3h0M901.3 539.5h0M905.4 540.3h0M909.5 544.6h0M913.6 540.0h0M917.7 540.9h0M921.8 546.2h0M925.9 545.5h0M930.0 549.9h0M934.1 543.9h0M938.2 545.1h0M942.3 540.5h0M946.4 553.8h0M950.5 540.3h0M954.6 548.3h0M958.6 543.4h0M962.7 549.6h0M966.8 551.8h0M970.9 540.7h0M975.0 547.9h0M979.1 540.8h0M983.1 556.2h0M987.2 547.6h0M991.3 542.4h0M995.4 546.8h0M999.4 556.5h0M1003.5 557.5h0M1007.6 556.5h0M1011.6 546.8h0M1015.7 549.9h0M1019.8 558.6h0M1023.8 547.3h0M1027.9 549.4h0M1031.9 546.5h0M1036.0 545.7h0M1040.1 557.2h0M1044.1 554.6h0M1048.2 553.9h0M1052.2 554.7h0M1056.3 556.9h0M1060.3 559.4h0M1064.4 552.3h0M1068.4 550.9h0M1072.5 547.8h0M1076.5 558.0h0M1080.6 550.6h0M1084.6 546.2h0M1088.7 552.3h0M1092.7 553.9h0M1096.7 558.0h0M1100.8 559.1h0M1104.8 551.1h0M1108.9 551.0h0M1112.9 553.5h0M1116.9 549.5h0M1120.9 555.0h0M1125.0 558.0h0M1129.0 556.1h0M1133.0 548.3h0M1137.1 550.3h0" stroke="#ff3691" stroke-width="4.9" stroke-linecap="round" fill="none"/>
<path d="M-8.7 557.2h0M-4.3 540.8h0M0.1 553.8h0M4.5 553.9h0M8.9 548.4h0M13.3 544.9h0M17.7 554.6h0M22.1 547.5h0M26.5 552.7h0M30.9 554.8h0M35.3 548.9h0M39.7 552.4h0M44.1 551.8h0M48.5 545.2h0M52.9 552.6h0M57.2 549.4h0M61.6 540.9h0M66.0 551.3h0M70.4 551.5h0M74.8 549.0h0M79.1 538.4h0M83.5 558.4h0M87.9 557.5h0M92.3 557.0h0M96.6 554.4h0M101.0 542.6h0M105.4 551.6h0M109.7 543.0h0M114.1 564.3h0M118.5 543.8h0M122.8 551.3h0M127.2 534.4h0M131.5 536.2h0M135.9 540.0h0M140.3 548.0h0M144.6 546.0h0M149.0 544.0h0M153.3 529.4h0M157.7 552.7h0M162.0 539.5h0M166.4 557.9h0M170.7 558.4h0M175.1 548.6h0M179.4 548.0h0M183.7 530.6h0M188.1 557.9h0M192.4 540.3h0M196.8 545.4h0M201.1 530.9h0M205.4 535.0h0M209.8 524.8h0M214.1 530.4h0M218.4 532.0h0M222.8 534.4h0M227.1 543.6h0M231.4 537.7h0M235.7 536.1h0M240.1 534.3h0M244.4 547.8h0M248.7 528.0h0M253.0 540.2h0M257.3 516.5h0M261.7 523.9h0M266.0 532.9h0M270.3 528.3h0M274.6 550.4h0M278.9 545.5h0M283.2 512.9h0M287.5 513.9h0M291.8 519.3h0M296.1 532.5h0M300.4 527.7h0M304.7 520.1h0M309.0 503.9h0M313.3 504.3h0M317.6 487.8h0M321.9 495.1h0M326.2 508.9h0M330.5 510.3h0M334.8 492.6h0M339.1 501.0h0M343.4 510.0h0M347.7 496.0h0M352.0 488.9h0M356.3 491.6h0M360.5 485.9h0M364.8 478.4h0M369.1 471.0h0M373.4 469.7h0M377.7 468.7h0M381.9 453.7h0M386.2 443.7h0M390.5 432.0h0M394.7 422.5h0M399.0 419.0h0M403.3 411.7h0M407.6 407.4h0M411.8 397.5h0M416.1 412.5h0M420.4 380.0h0M424.6 393.0h0M428.9 376.0h0M433.1 390.0h0M437.4 411.7h0M441.6 411.0h0M445.9 413.0h0M450.2 421.6h0M454.4 427.0h0M458.7 443.5h0M462.9 446.0h0M467.2 451.0h0M471.4 466.0h0M475.6 460.5h0M479.9 461.0h0M484.1 455.7h0M488.4 449.7h0M492.6 463.0h0M496.8 465.3h0M501.1 455.2h0M505.3 477.2h0M509.6 466.0h0M513.8 476.0h0M518.0 473.4h0M522.2 469.0h0M526.5 483.5h0M530.7 465.5h0M534.9 463.8h0M539.1 471.2h0M543.4 476.1h0M547.6 471.0h0M551.8 465.3h0M556.0 481.3h0M560.2 484.4h0M564.5 485.6h0M568.7 483.7h0M572.9 480.0h0M577.1 485.0h0M581.3 489.0h0M585.5 489.3h0M589.7 480.0h0M593.9 497.0h0M598.1 495.0h0M602.3 481.4h0M606.5 483.7h0M610.7 483.7h0M614.9 494.0h0M619.1 493.0h0M623.3 491.3h0M627.5 490.0h0M631.7 494.0h0M635.9 486.0h0M640.1 483.7h0M644.3 494.0h0M648.5 500.6h0M652.7 485.6h0M656.8 483.0h0M661.0 487.5h0M665.2 478.0h0M669.4 483.7h0M673.6 473.0h0M677.7 483.7h0M681.9 491.0h0M686.1 495.0h0M690.3 473.0h0M694.4 480.0h0M698.6 483.7h0M702.8 476.0h0M706.9 468.7h0M711.1 479.0h0M715.3 474.0h0M719.4 470.6h0M723.6 452.6h0M727.8 455.0h0M731.9 435.7h0M736.1 441.7h0M740.2 428.6h0M744.4 421.9h0M748.6 421.0h0M752.7 400.0h0M756.9 381.7h0M761.0 350.6h0M765.2 332.0h0M769.3 310.0h0M773.4 338.0h0M777.6 336.0h0M781.7 363.7h0M785.9 357.0h0M790.0 385.5h0M794.2 388.0h0M798.3 421.9h0M802.4 422.6h0M806.6 434.0h0M810.7 450.0h0M814.8 451.0h0M819.0 443.6h0M823.1 436.0h0M827.2 445.5h0M831.4 453.0h0M835.5 472.5h0M839.6 481.0h0M843.7 495.7h0M847.9 505.5h0M852.0 493.0h0M856.1 502.5h0M860.2 490.5h0M864.3 505.5h0M868.4 528.7h0M872.6 528.0h0M876.7 524.0h0M880.8 545.6h0M884.9 536.0h0M889.0 543.0h0M893.1 548.3h0M897.2 544.5h0M901.3 548.7h0M905.4 537.2h0M909.5 540.1h0M913.6 540.8h0M917.7 549.9h0M921.8 569.6h0M925.9 550.1h0M930.0 548.1h0M934.1 548.9h0M938.2 555.2h0M942.3 553.9h0M946.4 543.5h0M950.5 556.2h0M954.6 550.5h0M958.6 555.6h0M962.7 539.7h0M966.8 542.5h0M970.9 555.0h0M975.0 541.5h0M979.1 554.2h0M983.1 554.1h0M987.2 553.2h0M991.3 554.6h0M995.4 554.3h0M999.4 555.5h0M1003.5 550.7h0M1007.6 553.0h0M1011.6 569.9h0M1015.7 559.8h0M1019.8 556.9h0M1023.8 555.7h0M1027.9 549.4h0M1031.9 554.9h0M1036.0 552.3h0M1040.1 559.2h0M1044.1 548.7h0M1048.2 540.5h0M1052.2 550.9h0M1056.3 558.1h0M1060.3 568.2h0M1064.4 560.2h0M1068.4 548.9h0M1072.5 553.3h0M1076.5 549.3h0M1080.6 553.7h0M1084.6 549.8h0M1088.7 545.6h0M1092.7 557.7h0M1096.7 556.5h0M1100.8 554.6h0M1104.8 557.7h0M1108.9 567.5h0M1112.9 556.9h0M1116.9 554.3h0M1120.9 561.5h0M1125.0 547.5h0M1129.0 561.2h0M1133.0 552.6h0M1137.1 552.4h0" stroke="#e655fb" stroke-width="4.9" stroke-linecap="round" fill="none"/>
<path d="M-8.7 552.6h0M-4.3 561.5h0M0.1 547.7h0M4.5 557.1h0M8.9 553.6h0M13.3 543.2h0M17.7 556.0h0M22.1 545.8h0M26.5 541.8h0M30.9 545.3h0M35.3 545.1h0M39.7 552.1h0M44.1 543.9h0M48.5 556.1h0M52.9 548.2h0M57.2 542.2h0M61.6 540.9h0M66.0 546.3h0M70.4 532.6h0M74.8 531.0h0M79.1 537.7h0M83.5 545.7h0M87.9 542.4h0M92.3 540.8h0M96.6 538.8h0M101.0 526.7h0M105.4 536.8h0M109.7 527.7h0M114.1 542.2h0M118.5 536.6h0M122.8 535.4h0M127.2 537.6h0M131.5 536.4h0M135.9 535.0h0M140.3 534.6h0M144.6 528.0h0M149.0 523.1h0M153.3 533.3h0M157.7 541.0h0M162.0 539.6h0M166.4 532.7h0M170.7 536.7h0M175.1 529.2h0M179.4 532.6h0M183.7 525.4h0M188.1 528.5h0M192.4 538.3h0M196.8 529.9h0M201.1 533.1h0M205.4 518.6h0M209.8 518.2h0M214.1 521.4h0M218.4 524.6h0M222.8 519.7h0M227.1 526.7h0M231.4 516.9h0M235.7 527.6h0M240.1 524.1h0M244.4 510.2h0M248.7 518.6h0M253.0 511.5h0M257.3 516.3h0M261.7 504.0h0M266.0 506.9h0M270.3 507.3h0M274.6 487.3h0M278.9 492.4h0M283.2 503.1h0M287.5 498.7h0M291.8 502.9h0M296.1 496.4h0M300.4 486.7h0M304.7 494.0h0M309.0 481.6h0M313.3 477.4h0M317.6 470.0h0M321.9 472.5h0M326.2 460.6h0M330.5 463.6h0M334.8 455.5h0M339.1 479.3h0M343.4 452.3h0M347.7 447.8h0M352.0 441.7h0M356.3 440.9h0M360.5 437.6h0M364.8 438.6h0M369.1 427.4h0M373.4 411.7h0M377.7 419.6h0M381.9 415.0h0M386.2 409.0h0M390.5 390.0h0M394.7 383.0h0M399.0 386.7h0M403.3 358.0h0M407.6 375.6h0M411.8 359.0h0M416.1 357.8h0M420.4 344.4h0M424.6 370.5h0M428.9 364.6h0M433.1 368.5h0M437.4 337.0h0M441.6 359.7h0M445.9 357.0h0M450.2 363.5h0M454.4 371.0h0M458.7 374.0h0M462.9 390.0h0M467.2 382.0h0M471.4 409.0h0M475.6 411.0h0M479.9 398.0h0M484.1 416.0h0M488.4 418.0h0M492.6 427.0h0M496.8 420.7h0M501.1 423.0h0M505.3 423.0h0M509.6 427.0h0M513.8 427.0h0M518.0 442.1h0M522.2 439.1h0M526.5 440.4h0M530.7 435.6h0M534.9 445.2h0M539.1 451.1h0M543.4 445.3h0M547.6 455.9h0M551.8 450.5h0M556.0 454.5h0M560.2 450.6h0M564.5 456.7h0M568.7 457.0h0M572.9 455.6h0M577.1 461.5h0M581.3 462.0h0M585.5 456.8h0M589.7 475.5h0M593.9 463.9h0M598.1 463.9h0M602.3 466.0h0M606.5 470.6h0M610.7 463.9h0M614.9 466.0h0M619.1 468.7h0M623.3 474.0h0M627.5 463.0h0M631.7 463.9h0M635.9 474.0h0M640.1 470.6h0M644.3 466.0h0M648.5 466.0h0M652.7 473.0h0M656.8 474.0h0M661.0 465.0h0M665.2 465.7h0M669.4 479.0h0M673.6 462.0h0M677.7 476.0h0M681.9 457.5h0M686.1 462.0h0M690.3 449.0h0M694.4 451.0h0M698.6 446.0h0M702.8 459.0h0M706.9 453.0h0M711.1 451.0h0M715.3 449.0h0M719.4 429.0h0M723.6 418.0h0M727.8 436.9h0M731.9 428.6h0M736.1 425.6h0M740.2 408.7h0M744.4 395.6h0M748.6 354.0h0M752.7 334.9h0M756.9 310.5h0M761.0 300.0h0M765.2 270.5h0M769.3 249.0h0M773.4 257.0h0M777.6 253.7h0M781.7 286.0h0M785.9 315.0h0M790.0 311.0h0M794.2 344.0h0M798.3 348.7h0M802.4 353.0h0M806.6 363.7h0M810.7 386.0h0M814.8 380.0h0M819.0 386.0h0M823.1 375.0h0M827.2 396.0h0M831.4 395.6h0M835.5 407.0h0M839.6 427.5h0M843.7 445.0h0M847.9 447.0h0M852.0 470.6h0M856.1 470.6h0M860.2 477.0h0M864.3 505.5h0M868.4 508.0h0M872.6 513.0h0M876.7 528.7h0M880.8 525.0h0M884.9 533.0h0M889.0 528.3h0M893.1 531.1h0M897.2 540.5h0M901.3 542.4h0M905.4 534.9h0M909.5 532.5h0M913.6 534.9h0M917.7 537.7h0M921.8 539.5h0M925.9 543.1h0M930.0 549.3h0M934.1 550.1h0M938.2 542.7h0M942.3 548.4h0M946.4 550.4h0M950.5 553.2h0M954.6 546.4h0M958.6 544.1h0M962.7 551.2h0M966.8 555.0h0M970.9 545.8h0M975.0 557.3h0M979.1 556.5h0M983.1 547.7h0M987.2 541.9h0M991.3 546.5h0M995.4 547.9h0M999.4 552.1h0M1003.5 542.2h0M1007.6 561.1h0M1011.6 560.8h0M1015.7 547.0h0M1019.8 542.0h0M1023.8 549.9h0M1027.9 552.7h0M1031.9 557.1h0M1036.0 554.4h0M1040.1 550.4h0M1044.1 542.5h0M1048.2 553.9h0M1052.2 555.6h0M1056.3 550.4h0M1060.3 553.2h0M1064.4 553.0h0M1068.4 551.0h0M1072.5 547.0h0M1076.5 553.9h0M1080.6 546.0h0M1084.6 558.9h0M1088.7 548.6h0M1092.7 555.1h0M1096.7 549.7h0M1100.8 555.0h0M1104.8 552.5h0M1108.9 556.1h0M1112.9 550.3h0M1116.9 546.7h0M1120.9 553.0h0M1125.0 552.9h0M1129.0 547.8h0M1133.0 551.5h0M1137.1 547.1h0" stroke="#7f5fff" stroke-width="4.9" stroke-linecap="round" fill="none"/>
<path d="M-8.7 584.2h0M-4.3 581.4h0M0.1 583.6h0M8.9 584.2h0M13.3 581.7h0M17.7 583.7h0M22.1 582.0h0M26.5 579.3h0M30.9 582.7h0M35.3 588.2h0M39.7 565.3h0M44.1 582.0h0M48.5 579.7h0M52.9 581.0h0M57.2 588.3h0M61.6 580.7h0M66.0 585.4h0M70.4 576.9h0M74.8 579.7h0M79.1 583.3h0M83.5 574.4h0M87.9 579.0h0M92.3 573.8h0M96.6 582.0h0M101.0 574.8h0M105.4 578.7h0M109.7 576.0h0M114.1 569.5h0M118.5 579.0h0M122.8 568.8h0M127.2 575.0h0M131.5 576.7h0M135.9 572.8h0M140.3 571.0h0M144.6 569.8h0M149.0 563.8h0M153.3 561.8h0M157.7 567.0h0M162.0 565.2h0M166.4 561.8h0M170.7 567.0h0M175.1 569.8h0M179.4 561.8h0M183.7 567.8h0M188.1 560.3h0M192.4 567.0h0M196.8 559.8h0M201.1 566.0h0M205.4 554.8h0M209.8 558.8h0M214.1 560.0h0M218.4 560.8h0M222.8 558.0h0M227.1 557.8h0M231.4 560.0h0M235.7 557.8h0M240.1 552.8h0M244.4 555.0h0M248.7 555.8h0M253.0 555.8h0M257.3 555.8h0M261.7 560.5h0M266.0 551.0h0M270.3 543.8h0M274.6 551.0h0M278.9 549.0h0M283.2 551.8h0M287.5 543.8h0M291.8 541.0h0M296.1 527.9h0M300.4 544.0h0M304.7 543.6h0M309.0 535.0h0M313.3 531.0h0M317.6 527.5h0M321.9 534.0h0M326.2 527.5h0M330.5 520.0h0M334.8 520.7h0M339.1 515.0h0M343.4 513.0h0M347.7 512.5h0M352.0 508.7h0M356.3 489.0h0M360.5 483.0h0M364.8 489.0h0M369.1 474.0h0M373.4 451.0h0M377.7 448.0h0M381.9 446.6h0M386.2 418.0h0M390.5 424.0h0M394.7 389.0h0M399.0 392.0h0M403.3 389.0h0M407.6 380.0h0M411.8 355.8h0M416.1 354.0h0M420.4 363.7h0M424.6 356.0h0M428.9 361.0h0M433.1 373.0h0M437.4 381.0h0M441.6 394.6h0M445.9 401.7h0M450.2 412.0h0M454.4 424.0h0M458.7 439.5h0M462.9 424.0h0M467.2 443.7h0M471.4 452.0h0M475.6 477.0h0M479.9 472.7h0M484.1 468.0h0M488.4 465.0h0M492.6 477.8h0M496.8 478.9h0M501.1 482.8h0M505.3 485.1h0M509.6 485.5h0M513.8 479.7h0M518.0 490.8h0M522.2 487.3h0M526.5 477.8h0M530.7 500.0h0M534.9 490.1h0M539.1 501.9h0M543.4 490.4h0M547.6 497.0h0M551.8 503.2h0M556.0 501.8h0M560.2 509.6h0M564.5 496.0h0M568.7 503.9h0M572.9 505.5h0M577.1 514.5h0M581.3 511.8h0M585.5 510.7h0M589.7 517.5h0M593.9 512.5h0M598.1 513.7h0M602.3 510.7h0M606.5 512.3h0M610.7 513.9h0M614.9 515.0h0M619.1 511.5h0M623.3 512.6h0M627.5 494.2h0M631.7 514.5h0M635.9 508.0h0M640.1 515.6h0M644.3 505.0h0M648.5 507.0h0M652.7 502.5h0M656.8 506.0h0M661.0 498.0h0M665.2 509.0h0M669.4 498.7h0M673.6 495.0h0M677.7 504.0h0M681.9 497.0h0M686.1 501.7h0M690.3 493.0h0M694.4 488.6h0M698.6 499.5h0M702.8 485.6h0M706.9 473.0h0M711.1 492.0h0M715.3 482.0h0M719.4 464.0h0M723.6 465.0h0M727.8 470.0h0M731.9 450.0h0M736.1 456.7h0M740.2 450.7h0M744.4 434.0h0M748.6 419.0h0M752.7 387.0h0M756.9 374.0h0M761.0 357.0h0M765.2 337.0h0M769.3 317.0h0M773.4 318.0h0M777.6 311.6h0M781.7 327.0h0M785.9 333.0h0M790.0 358.0h0M794.2 375.0h0M798.3 393.7h0M802.4 396.7h0M806.6 397.5h0M810.7 413.0h0M814.8 415.0h0M819.0 425.6h0M823.1 423.7h0M827.2 423.0h0M831.4 453.7h0M835.5 460.5h0M839.6 473.0h0M843.7 497.0h0M847.9 498.7h0M852.0 521.0h0M856.1 538.0h0M860.2 545.6h0M864.3 560.6h0M868.4 553.0h0M872.6 564.0h0M876.7 569.0h0M880.8 570.0h0M884.9 573.3h0M889.0 575.6h0M893.1 577.5h0M897.2 579.0h0M901.3 578.6h0M905.4 577.5h0M909.5 579.1h0M913.6 581.2h0M917.7 571.0h0M921.8 580.5h0M925.9 580.8h0M930.0 584.2h0M934.1 582.5h0M938.2 577.8h0M942.3 586.4h0M946.4 586.6h0M954.6 589.5h0M958.6 580.2h0M970.9 580.5h0M975.0 591.0h0M979.1 585.7h0M987.2 587.6h0M995.4 588.4h0M999.4 584.6h0M1003.5 588.1h0M1011.6 587.1h0M1015.7 578.6h0M1027.9 587.4h0M1031.9 582.0h0M1036.0 585.5h0M1040.1 584.4h0M1048.2 587.4h0M1056.3 589.8h0M1060.3 582.5h0M1064.4 590.3h0M1068.4 580.6h0M1076.5 587.9h0M1084.6 590.8h0M1092.7 589.0h0M1096.7 581.0h0M1100.8 589.1h0M1108.9 589.2h0M1112.9 588.7h0M1120.9 590.3h0M1133.0 584.6h0M1137.1 586.9h0" stroke="#6ea4f8" stroke-width="4.9" stroke-linecap="round" fill="none"/>
</svg></div>
<div id="sash1" class="abs"></div>
<svg id="aux" width="1128" height="113" viewBox="0 594 1128 113">
<rect x="0" y="594" width="1128" height="113" fill="#222222"/>
<rect x="0" y="594" width="1128" height="1" fill="#0a0a0a"/>
<path d="M0 651.5H1128" stroke="#d8d8d8" stroke-width="1.3"/>
<polyline points="-8.7,653.8 -4.3,653.2 0.1,653.7 4.5,656.6 8.9,653.8 13.3,653.3 17.7,653.7 22.1,653.4 26.5,652.8 30.9,653.5 35.3,654.6 39.7,650.0 44.1,653.4 48.5,652.9 52.9,653.2 57.2,654.6 61.6,653.1 66.0,654.0 70.4,652.3 74.8,652.9 79.1,653.6 83.5,651.8 87.9,652.8 92.3,651.7 96.6,653.4 101.0,651.9 105.4,652.7 109.7,652.2 114.1,650.9 118.5,652.8 122.8,650.7 127.2,652.0 131.5,652.3 135.9,651.5 140.3,651.2 144.6,650.9 149.0,649.7 153.3,649.3 157.7,650.4 162.0,650.0 166.4,649.3 170.7,650.4 175.1,650.9 179.4,649.3 183.7,650.5 188.1,649.0 192.4,650.4 196.8,648.9 201.1,650.2 205.4,647.9 209.8,648.7 214.1,649.0 218.4,649.1 222.8,648.6 227.1,648.5 231.4,649.0 235.7,648.5 240.1,647.5 244.4,648.0 248.7,648.1 253.0,648.1 257.3,648.1 261.7,649.1 266.0,647.2 270.3,645.7 274.6,647.2 278.9,646.8 283.2,647.3 287.5,645.7 291.8,645.2 296.1,642.5 300.4,645.8 304.7,645.7 309.0,644.0 313.3,643.2 317.6,642.5 321.9,643.8 326.2,642.5 330.5,641.0 334.8,641.1 339.1,640.0 343.4,639.6 347.7,639.5 352.0,638.7 356.3,634.8 360.5,633.6 364.8,634.8 369.1,631.8 373.4,627.2 377.7,626.6 381.9,626.3 386.2,620.6 390.5,621.8 394.7,614.8 399.0,615.4 403.3,614.8 407.6,613.0 411.8,608.1 416.1,607.8 420.4,609.7 424.6,608.2 428.9,609.2 433.1,611.6 437.4,613.2 441.6,615.9 445.9,617.3 450.2,619.4 454.4,621.8 458.7,624.9 462.9,621.8 467.2,625.7 471.4,627.4 475.6,632.4 479.9,631.5 484.1,630.6 488.4,630.0 492.6,632.5 496.8,632.8 501.1,633.5 505.3,634.0 509.6,634.1 513.8,632.9 518.0,635.1 522.2,634.4 526.5,632.5 530.7,637.0 534.9,635.0 539.1,637.3 543.4,635.0 547.6,636.4 551.8,637.6 556.0,637.3 560.2,638.9 564.5,636.2 568.7,637.8 572.9,638.1 577.1,639.9 581.3,639.3 585.5,639.1 589.7,640.5 593.9,639.5 598.1,639.7 602.3,639.1 606.5,639.4 610.7,639.7 614.9,640.0 619.1,639.3 623.3,639.5 627.5,635.8 631.7,639.9 635.9,638.6 640.1,640.1 644.3,638.0 648.5,638.4 652.7,637.5 656.8,638.2 661.0,636.6 665.2,638.8 669.4,636.7 673.6,636.0 677.7,637.8 681.9,636.4 686.1,637.3 690.3,635.6 694.4,634.7 698.6,636.9 702.8,634.1 706.9,631.6 711.1,635.4 715.3,633.4 719.4,629.8 723.6,630.0 727.8,631.0 731.9,627.0 736.1,628.3 740.2,627.1 744.4,623.8 748.6,620.8 752.7,614.4 756.9,611.8 761.0,608.4 765.2,604.4 769.3,600.4 773.4,600.6 777.6,599.3 781.7,602.4 785.9,603.6 790.0,608.6 794.2,612.0 798.3,615.7 802.4,616.3 806.6,616.5 810.7,619.6 814.8,620.0 819.0,622.1 823.1,621.7 827.2,621.6 831.4,627.7 835.5,629.1 839.6,631.6 843.7,636.4 847.9,636.7 852.0,641.2 856.1,644.6 860.2,646.1 864.3,649.1 868.4,647.6 872.6,649.8 876.7,650.8 880.8,651.0 884.9,651.6 889.0,652.1 893.1,652.5 897.2,652.8 901.3,652.7 905.4,652.5 909.5,652.8 913.6,653.2 917.7,651.2 921.8,653.1 925.9,653.1 930.0,653.8 934.1,653.5 938.2,652.5 942.3,654.2 946.4,654.3 950.5,655.2 954.6,654.9 958.6,653.0 962.7,655.6 966.8,655.4 970.9,653.1 975.0,655.2 979.1,654.1 983.1,655.3 987.2,654.5 991.3,657.5 995.4,654.6 999.4,653.9 1003.5,654.6 1007.6,656.2 1011.6,654.4 1015.7,652.7 1019.8,656.2 1023.8,655.2 1027.9,654.4 1031.9,653.4 1036.0,654.1 1040.1,653.8 1044.1,655.8 1048.2,654.4 1052.2,655.4 1056.3,654.9 1060.3,653.5 1064.4,655.0 1068.4,653.1 1072.5,655.6 1076.5,654.5 1080.6,655.8 1084.6,655.1 1088.7,656.3 1092.7,654.8 1096.7,653.2 1100.8,654.8 1104.8,655.6 1108.9,654.8 1112.9,654.7 1116.9,656.5 1120.9,655.0 1125.0,656.1 1129.0,655.3 1133.0,653.9 1137.1,654.3" fill="none" stroke="#0d7a0d" stroke-width="1.3" stroke-linejoin="round"/>
<path d="M0 615.5H4M0 686.5H4" stroke="#e8e8e8" stroke-width="1"/>
<g font-family="Liberation Sans, sans-serif" font-size="11.5" fill="#ececec">
<text x="4.8" y="619.4">200</text><text x="4.8" y="690.4">-200</text>
<text x="1126" y="610" text-anchor="end" font-size="12.5">×0.2</text>
</g></svg>
<div id="sash2" class="abs"></div>
<div id="out" class="abs"><div><span>=-&gt; %bg7 = Spline(1350.3,42)</span>
<span style="color:#839496">%bg7 created.</span>
<span>=-&gt; @7: Y = y - %bg7(x)</span></div></div>
<style>
#vsash{left:1132px;top:101px;width:1px;height:722px;background:#cdcdcc}
#vsashw{left:1128px;top:101px;width:4px;height:722px;background:#f3f3f2}
#vstrip{left:1133px;top:101px;width:3.5px;height:722px;background:#ebebea}
.tab{position:absolute;border:1px solid #b4b4b0;border-bottom:none;border-radius:4px 4px 0 0;font-size:14.6px;letter-spacing:-0.45px;white-space:nowrap}
.tab span{position:absolute;top:0;left:0;width:100%;text-align:center}
#nb{left:1136.5px;top:135px;width:367.5px;height:508px;border:1px solid #bdbdb9;background:#ececeb;box-shadow:inset 4.5px 0 0 #fdfdfd,inset -4.5px 0 0 #fdfdfd,inset 0 -2.5px 0 #fdfdfd,inset 0 2px 0 #fdfdfd}
#list{left:1142px;top:137px;width:1356px;}
#listbox{left:1142px;top:137px;width:356px;height:298px;background:#fff;border:1px solid #dcdcdb}
.hdr{position:absolute;top:138px;height:23px;border-right:1px solid #dededd;border-bottom:1px solid #dededd;background:#fff;font-size:14.6px;letter-spacing:-0.4px;white-space:nowrap}
.hdr span{position:absolute;top:3px}
.row{position:absolute;left:1143px;width:354px;height:24.5px;border-bottom:1px solid #ebebea;font-size:14.6px;letter-spacing:-0.42px;white-space:nowrap}
.row i{position:absolute;left:2px;top:5px;width:15px;height:15px;border:1.6px solid #111}
.row span{position:absolute;top:4px}
.vl{position:absolute;top:161px;width:1px;height:196px;background:#e6e6e5}
#info{left:1142px;top:444px;width:356px;height:90px;background:#fff;border:1px solid #c9c9c7;overflow:hidden;font-size:14.6px;letter-spacing:-0.47px;line-height:18.8px;color:#1e2326;white-space:pre}
#info div.t{position:absolute;left:0.2px;top:-6.5px}
#isb{position:absolute;left:343px;top:0;width:12px;height:88px;background:#dadad9;border-left:1px solid #c9c9c7}
#isb b{position:absolute;left:2.5px;top:8px;width:6.5px;height:77px;border-radius:3.5px;background:#7e8283}
.gbtn{position:absolute;border:1px solid #b9b9b6;border-radius:4px;background:linear-gradient(#f4f4f3,#dcdcdb);box-shadow:0 1px 0 rgba(255,255,255,.7)}
.entry{position:absolute;background:#fff;border:1px solid #c0c0bd;border-radius:4px;box-shadow:inset 0 1px 1px rgba(0,0,0,.06)}
.cb{position:absolute;width:15.5px;height:15.5px;border:1px solid #adadaa;border-radius:3px;background:linear-gradient(#fcfcfc,#e9e9e8)}
.lbl{position:absolute;font-size:14.6px;letter-spacing:-0.45px;white-space:nowrap}
.track{position:absolute;height:4px;border-radius:2px}
.knob{position:absolute;width:18px;height:18px;border-radius:9px;border:1px solid #a9a9a6;background:linear-gradient(#fafafa,#dededd);box-shadow:0 1px 1px rgba(0,0,0,.12)}
</style>
<div id="vsashw" class="abs"></div><div id="vstrip" class="abs"></div><div id="vsash" class="abs"></div>
<div id="nb" class="abs"></div>
<div class="tab" style="left:1137px;top:102px;width:46px;height:35px;background:#fff;z-index:3"><span style="top:8px">data</span></div>
<div class="tab" style="left:1182px;top:104px;width:73px;height:31px;background:linear-gradient(#f1f1f0,#e8e8e7)"><span style="top:6.5px">functions</span></div>
<div class="tab" style="left:1254px;top:104px;width:70px;height:31px;background:linear-gradient(#f1f1f0,#e8e8e7)"><span style="top:6.5px">variables</span></div>
<div id="listbox" class="abs"></div>
<div class="hdr" style="left:1143px;width:40.5px"><span style="left:5.6px">No</span></div>
<div class="hdr" style="left:1183.5px;width:40.5px"><span style="left:5.6px">#F+#</span></div>
<div class="hdr" style="left:1224px;width:101px"><span style="left:5.6px">Name</span></div>
<div class="hdr" style="left:1325px;width:172px"><span style="left:0px"></span></div>
<div class="vl" style="left:1182.5px"></div>
<div class="vl" style="left:1222.5px"></div>
<div class="vl" style="left:1325.3px"></div>
<div class="row" style="top:161.3px;"><i style="background:#00f410"></i><span style="left:22.2px">0</span><span style="left:42.5px">0+0</span><span style="left:83px">rGO_111</span></div>
<div class="row" style="top:185.8px;"><i style="background:#aaff11"></i><span style="left:22.2px">1</span><span style="left:42.5px">0+0</span><span style="left:83px">rGO_112</span></div>
<div class="row" style="top:210.3px;"><i style="background:#ffc020"></i><span style="left:22.2px">2</span><span style="left:42.5px">0+0</span><span style="left:83px">rGO_113</span></div>
<div class="row" style="top:234.8px;"><i style="background:#ff4428"></i><span style="left:22.2px">3</span><span style="left:42.5px">0+0</span><span style="left:83px">rGO_114</span></div>
<div class="row" style="top:259.3px;"><i style="background:#ff3691"></i><span style="left:22.2px">4</span><span style="left:42.5px">0+0</span><span style="left:83px">rGO_115</span></div>
<div class="row" style="top:283.8px;"><i style="background:#e655fb"></i><span style="left:22.2px">5</span><span style="left:42.5px">0+0</span><span style="left:83px">rGO_116</span></div>
<div class="row" style="top:308.3px;"><i style="background:#7f5fff"></i><span style="left:22.2px">6</span><span style="left:42.5px">0+0</span><span style="left:83px">rGO_117</span></div>
<div class="row" style="top:332.8px;color:#fff;"><div class="abs" style="left:0;top:0;width:182.5px;height:24px;background:#4289d8"></div><div class="abs" style="left:39px;top:0;width:1.3px;height:24px;background:#a9c9ec"></div><div class="abs" style="left:79px;top:0;width:1.3px;height:24px;background:#a9c9ec"></div><i style="background:#6ea4f8"></i><span style="left:22.2px">7</span><span style="left:42.5px">0+0</span><span style="left:83px">rGO_118</span></div>
<div class="abs" style="left:1142px;top:439px;width:356px;height:1.2px;background:#c3c3bf"></div>
<div id="info" class="abs"><div class="t">@7: 1011 points, 1011 active.
Filename: /home/aleplo/test/Documents/Chem/Master/
Data/baked_samples/11_cas924894-85-9/Sample/
Raman/rGO_118.txt
Data title: rGO_118</div><div id="isb"><b></b></div></div>
<div class="gbtn" style="left:1142px;top:537px;width:356px;height:30.5px"><span class="lbl" style="left:8px;top:6px">show all datasets</span><svg class="abs" style="left:334px;top:12px" width="11" height="6" viewBox="0 0 11 6"><path d="M0 0H11L5.5 5.6Z" fill="#2e3436"/></svg></div>
<svg class="abs" style="left:1146px;top:580px" width="11" height="12" viewBox="0 0 11 12"><ellipse cx="6.2" cy="8.4" rx="2.9" ry="2.7" fill="#111"/><circle cx="2.6" cy="4.4" r="1.2" fill="#111"/><circle cx="5.4" cy="2" r="1.1" fill="#111"/><circle cx="7.9" cy="3.8" r="1" fill="#111"/><circle cx="1.6" cy="7.4" r="1" fill="#111"/></svg>
<div class="entry" style="left:1156.5px;top:569.5px;width:35.5px;height:33px"></div>
<div class="abs" style="left:1156.5px;top:569.5px;width:21px;height:33px;border:1.6px solid #4a90d9;border-right:none;border-radius:4px 0 0 4px"></div>
<div class="abs" style="left:1165.7px;top:576.5px;width:1.2px;height:18px;background:#111"></div>
<span class="lbl" style="left:1166.6px;top:577.5px">5</span>
<div class="abs" style="left:1177px;top:570.5px;width:14px;height:31px;background:#f7f7f6;border-radius:0 3px 3px 0"></div><div class="abs" style="left:1177px;top:585.5px;width:14px;height:1px;background:#e4e4e3"></div><svg class="abs" style="left:1179.6px;top:575px" width="9" height="23" viewBox="0 0 9 23"><path d="M0 5H9L4.5 0.4Z M0 17.6H9L4.5 22.2Z" fill="#2e3436"/></svg>
<div class="cb" style="left:1199.2px;top:578px"></div><span class="lbl" style="left:1220.4px;top:577.3px">line</span>
<div class="cb" style="left:1250px;top:578px"></div><span class="lbl" style="left:1270.6px;top:577.3px">σ</span>
<svg class="abs" style="left:1441px;top:577px" width="12" height="18" viewBox="0 0 12 18"><path d="M1 2H11M1 16.4H11" stroke="#19e019" stroke-width="1.8"/><path d="M6 3V14.6M3 6.4L6 3.2L9 6.4M3.4 14.2H8.6" fill="none" stroke="#111" stroke-width="1.6"/></svg>
<div class="entry" style="left:1453.7px;top:569.5px;width:44.5px;height:33px"></div>
<div class="abs" style="left:1482.5px;top:570.5px;width:1px;height:31px;background:#dcdcdb"></div>
<span class="lbl" style="left:1462.3px;top:577.3px">0</span>
<svg class="abs" style="left:1485.6px;top:574px" width="9" height="23" viewBox="0 0 9 23"><path d="M0 5H9L4.5 0.4Z" fill="#2e3436"/><path d="M0 17.6H9L4.5 22.2Z" fill="#8f9393"/></svg>
<div class="gbtn" style="left:1142.6px;top:604.6px;width:35px;height:35px;"></div>
<div class="gbtn" style="left:1180.2px;top:604.6px;width:35px;height:35px;"></div>
<div class="gbtn" style="left:1218px;top:604.6px;width:35px;height:35px;background:linear-gradient(#fbfbfa,#f0f0ef);border-color:#cfcfcd;"></div>
<div class="gbtn" style="left:1255.2px;top:604.6px;width:35px;height:35px;"></div>
<div class="gbtn" style="left:1293px;top:604.6px;width:35px;height:35px;"></div>
<svg class="abs" style="left:1149.4px;top:612px" width="21" height="21" viewBox="0 0 21 21"><rect x=".6" y=".6" width="19.8" height="19.8" fill="#111"/><rect x="1.6" y="1.6" width="5.2" height="5.2" fill="#f6b8b8"/><rect x="7.9" y="1.6" width="5.2" height="5.2" fill="#5078d8"/><rect x="14.2" y="1.6" width="5.2" height="5.2" fill="#f8e89c"/><rect x="1.6" y="7.9" width="5.2" height="5.2" fill="#f4d8c0"/><rect x="7.9" y="7.9" width="5.2" height="5.2" fill="#e8e8f8"/><rect x="14.2" y="7.9" width="5.2" height="5.2" fill="#f0a040"/><rect x="1.6" y="14.2" width="5.2" height="5.2" fill="#f6b8b8"/><rect x="7.9" y="14.2" width="5.2" height="5.2" fill="#90e090"/><rect x="14.2" y="14.2" width="5.2" height="5.2" fill="#5078d8"/><path d="M9.4 6.4C9.4 5.2 11 5.2 11 6.4V10.2L12 9.8L13.2 10L14.4 10.4L15.6 11V14.2L14.8 16.8H9.8L7.6 13.2C7.2 12.4 8.2 11.8 8.8 12.6L9.4 13.4Z" fill="#ead8c4" stroke="#2a2a2a" stroke-width=".9" stroke-linejoin="round"/><path d="M9.8 17.4H14.8" stroke="#f4f4f4" stroke-width="1.2"/></svg>
<svg class="abs" style="left:1189px;top:615px" width="15" height="15" viewBox="0 0 19 20"><path d="M1.4 1H17V5.4H15.2L14.6 3.2H6.4L11.4 9.8L6 17H15L15.8 14.4H17.6L17 19.2H1.2V17.6L7.2 9.8L1.4 2.6Z" fill="#000"/></svg>
<svg class="abs" style="left:1224px;top:611.6px" width="24" height="24" viewBox="0 0 24 24"><path d="M1 13.2L1.8 3.2L4.4 2.6V1.2H7.6V2.4L10.4 2L10.8 12.6Z" fill="#d6d6d6" stroke="#2a2a2a" stroke-width=".9" stroke-linejoin="round"/><path d="M3 5.4L8.8 4.8M3 7.6L9 7M3 9.8L9 9.2" stroke="#6a6a6a" stroke-width=".7"/><path d="M5.6 7.2L12 11.8M12.4 9.4V12.4H9.2" fill="none" stroke="#3f9a4a" stroke-width="1.5"/><path d="M11.6 21.6L12 12.4L14.6 11.6V10H17.6V11.2L20.6 10.8L21 21.2Z" fill="#c2c2c2" stroke="#2a2a2a" stroke-width=".9" stroke-linejoin="round"/><path d="M13.6 14L19.6 13.4M13.6 16.2L19.6 15.6M13.6 18.4L19.6 17.8M13.6 20.4L19.6 19.8" stroke="#555" stroke-width=".7" stroke-dasharray="1 .6"/></svg>
<svg class="abs" style="left:1261px;top:615.4px" width="25" height="15" viewBox="0 0 25 15"><path d="M22.6 1H1.2V14H22.6" fill="#fff" stroke="#111" stroke-width="1"/><path d="M3 3.4H6M4.5 3.4V11.6M3 11.6H6" stroke="#111" stroke-width=".9" fill="none"/><text x="6.6" y="11.2" font-family="Liberation Mono, monospace" font-size="8.8" fill="#111" letter-spacing="-0.3">nam</text></svg>
<svg class="abs" style="left:1304.2px;top:616px" width="12" height="12" viewBox="0 0 12 12"><path d="M1.6 2L10.4 10M10.4 2L1.6 10" stroke="#111" stroke-width="2.5"/></svg>
<div class="abs" style="left:1137px;top:646.7px;width:367px;height:1.1px;background:#bfbfbb"></div>
<span class="lbl" style="left:1219.5px;top:652px;width:200px;text-align:center">%bg7 : Spline</span>
<span class="lbl" style="left:1136px;top:681.2px">x1</span>
<div class="entry" style="left:1154.5px;top:673px;width:169px;height:32.6px"><span class="lbl" style="left:9.5px;top:6.8px;color:#1e2326">1350.3</span></div>
<svg class="abs" style="left:1331px;top:681.2px" width="13" height="15" viewBox="0 0 13 15"><path d="M3.6 7V4.4C3.6 1.6 9.4 1.6 9.4 4.4V7" fill="none" stroke="#4a4a4a" stroke-width="1.6"/><rect x="1.2" y="6.4" width="10.6" height="7.6" rx="1.2" fill="#d9a066" stroke="#7a5226" stroke-width="1"/><path d="M2.4 9H10.6M2.4 11.4H10.6" stroke="#b47a3e" stroke-width=".8"/></svg>
<div class="track" style="left:1361px;top:687.2px;width:133px;background:#cfcfcd;border:1px solid #bdbdbb"></div>
<div class="track" style="left:1361px;top:687.2px;width:62px;background:#2a76c6;border:1px solid #1f5fa6"></div>
<div class="knob" style="left:1417.6px;top:680.2px"></div>
<span class="lbl" style="left:1136px;top:720.2px">y1</span>
<div class="entry" style="left:1154.5px;top:712px;width:169px;height:32.6px"><span class="lbl" style="left:9.5px;top:6.8px;color:#1e2326">42</span></div>
<svg class="abs" style="left:1331px;top:720.2px" width="13" height="15" viewBox="0 0 13 15"><path d="M3.6 7V4.4C3.6 1.6 9.4 1.6 9.4 4.4V7" fill="none" stroke="#4a4a4a" stroke-width="1.6"/><rect x="1.2" y="6.4" width="10.6" height="7.6" rx="1.2" fill="#d9a066" stroke="#7a5226" stroke-width="1"/><path d="M2.4 9H10.6M2.4 11.4H10.6" stroke="#b47a3e" stroke-width=".8"/></svg>
<div class="track" style="left:1361px;top:726.2px;width:133px;background:#cfcfcd;border:1px solid #bdbdbb"></div>
<div class="track" style="left:1361px;top:726.2px;width:62px;background:#2a76c6;border:1px solid #1f5fa6"></div>
<div class="knob" style="left:1417.6px;top:719.2px"></div>
<div class="abs" style="left:1068px;top:824px;width:1px;height:20px;background:#bcbcba"></div>
<div class="abs" style="left:1316px;top:822.5px;width:172px;height:1px;background:#dadad9"></div>
<div class="gbtn" style="left:1288.4px;top:823.6px;width:25.4px;height:20.6px;border-radius:3px"><svg class="abs" style="left:5.6px;top:5px" width="13" height="10" viewBox="0 0 13 10"><path d="M2 0V9M6.4 0V9M10.8 0V9" stroke="#333" stroke-width="1"/><rect x=".6" y="1" width="2.8" height="3.4" fill="#eee" stroke="#222" stroke-width=".8"/><rect x="5" y="4.4" width="2.8" height="3.4" fill="#eee" stroke="#222" stroke-width=".8"/><rect x="9.4" y="1.6" width="2.8" height="3.4" fill="#eee" stroke="#222" stroke-width=".8"/></svg></div>
<span class="lbl" style="left:1337px;top:826px">add point</span>
<svg class="abs" style="left:1394.5px;top:825px" width="14" height="18" viewBox="0 0 14 18"><path d="M1 5.6C2 3 4.6 3.4 6 5" fill="none" stroke="#666" stroke-width=".9"/><rect x="4" y="5" width="8.6" height="12" rx="3.2" fill="#f4f4f4" stroke="#6e7474" stroke-width="1"/><path d="M4 9.6H12.6M8.3 5V9.6" stroke="#6e7474" stroke-width=".8"/><rect x="4.8" y="5.6" width="3" height="3.6" fill="#9bb8dc"/></svg>
<span class="lbl" style="left:1411.4px;top:826px">del point</span>
<div class="entry" style="left:1px;top:789px;width:1109.5px;height:32.5px"></div>
<div class="abs" style="left:1110.5px;top:789px;width:17px;height:32.5px;border:1px solid #c9c9c7;border-radius:3px;background:linear-gradient(#f6f6f5,#e6e6e5)"></div>
<svg class="abs" style="left:1114.2px;top:794px" width="10" height="23" viewBox="0 0 10 23"><path d="M0.4 5.6H9.6L5 1Z M0.4 17.4H9.6L5 22Z" fill="#7c8080"/></svg>
<div class="abs" style="left:1116px;top:715px;width:12px;height:73px;background:#cacbca;border-left:1px solid #bdbebd"></div>
<div class="abs" style="left:1119px;top:745px;width:6px;height:40px;border-radius:3px;background:#7e8283"></div>
</div></body></html>
